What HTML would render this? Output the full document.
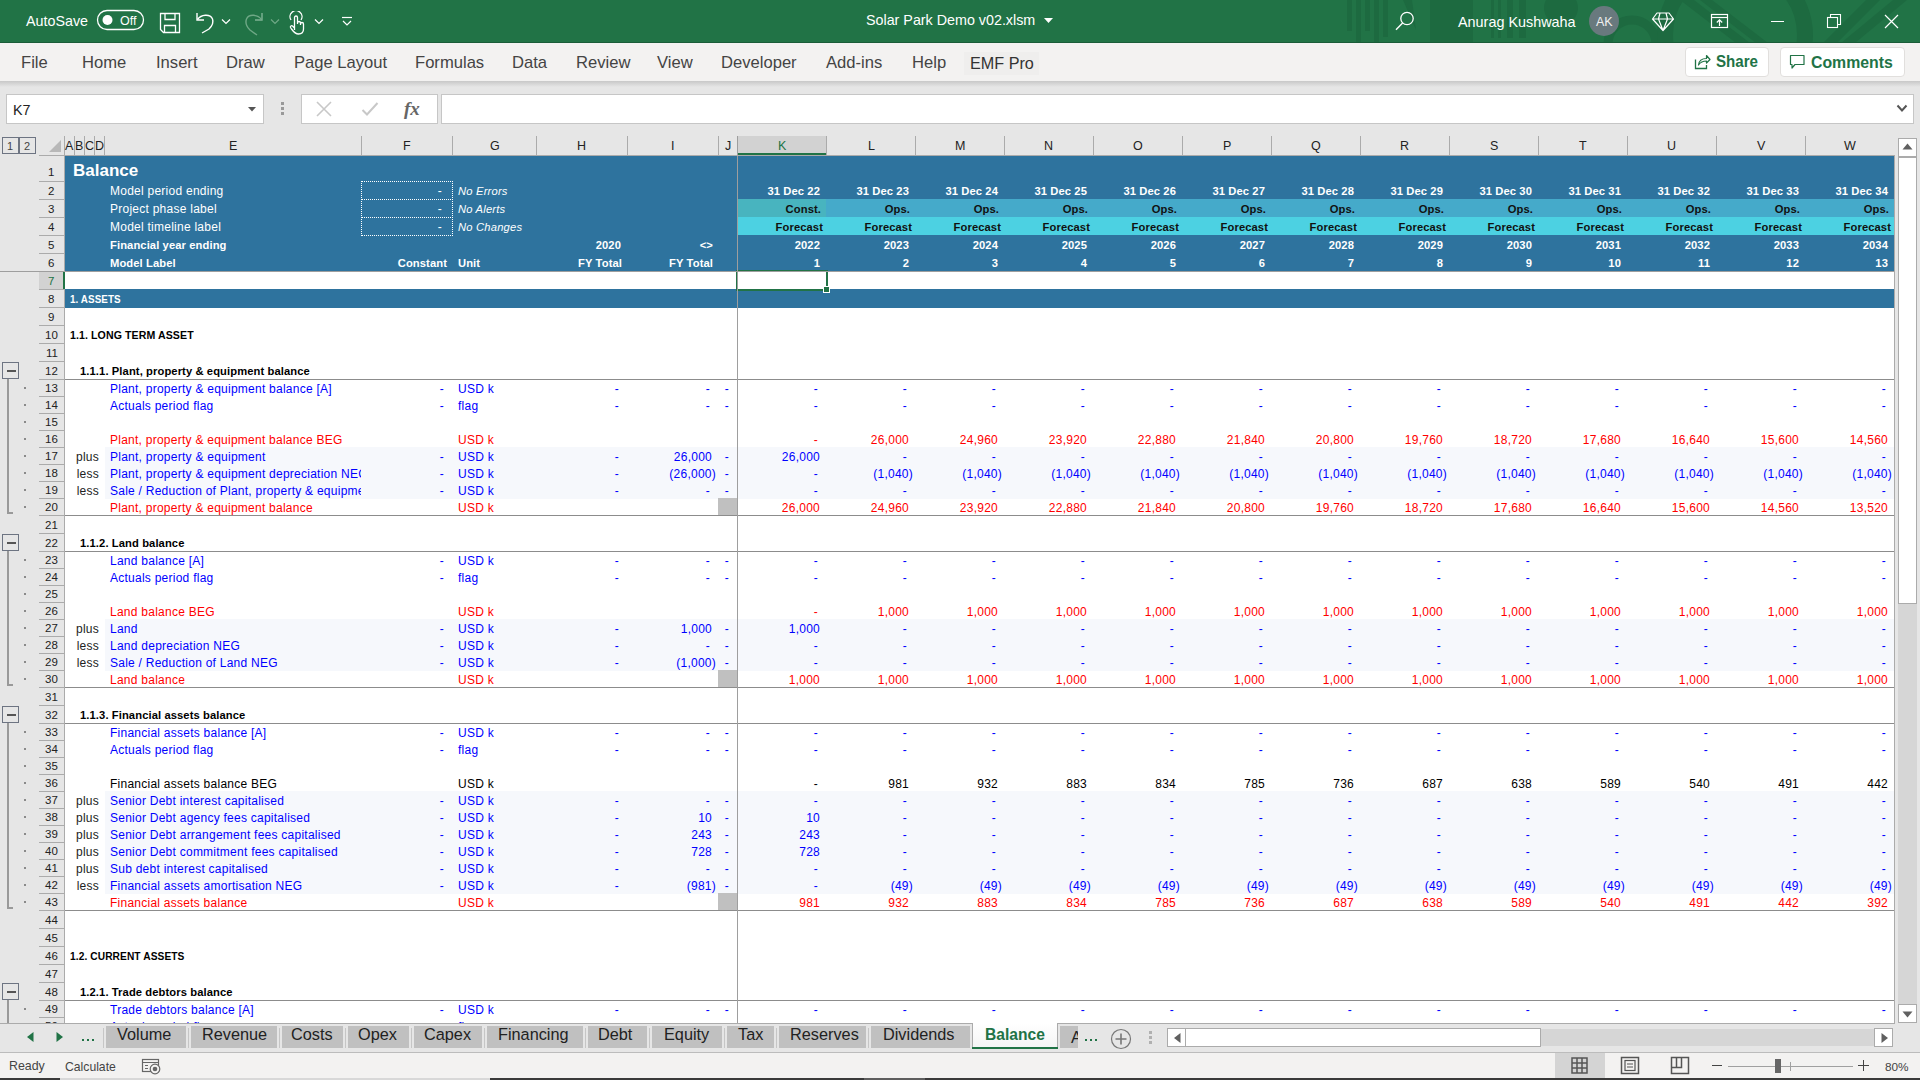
<!DOCTYPE html><html><head><meta charset="utf-8"><style>
html,body{margin:0;padding:0;}
body{width:1920px;height:1080px;position:relative;overflow:hidden;background:#e6e6e6;font-family:"Liberation Sans",sans-serif;}
.t{position:absolute;white-space:pre;}
svg{display:block;}
</style></head><body>
<div style="position:absolute;left:0px;top:0px;width:1920px;height:43px;background:#217346;"></div>
<svg style="position:absolute;left:0;top:0" width="1920" height="43" viewBox="0 0 1920 43"><rect x="1347" y="0" width="5" height="31" fill="#1d6a40"/><rect x="1356" y="0" width="5" height="42" fill="#1d6a40"/><rect x="1365" y="0" width="5" height="31" fill="#1d6a40"/><rect x="1374" y="0" width="5" height="42" fill="#1d6a40"/><rect x="1383" y="0" width="5" height="37" fill="#1d6a40"/><polygon points="1403,0 1412,0 1416,30" fill="#1d6a40"/><rect x="1430" y="0" width="43" height="42" fill="#1d6a40"/><rect x="1491" y="0" width="3" height="38" fill="#1d6a40"/><rect x="1498" y="0" width="3" height="38" fill="#1d6a40"/><rect x="1507" y="0" width="6" height="38" fill="#1d6a40"/><rect x="1519" y="0" width="7" height="38" fill="#1d6a40"/><circle cx="1561" cy="8" r="17" fill="#1d6a40"/><circle cx="1632" cy="44" r="24" fill="none" stroke="#1d6a40" stroke-width="9"/><circle cx="1735" cy="35" r="70" fill="none" stroke="#1d6a40" stroke-width="16"/><polygon points="1680,0 1694,0 1750,43 1736,43" fill="#1d6a40"/><polygon points="1700,0 1712,0 1768,43 1756,43" fill="#1d6a40"/><polygon points="1866,0 1880,0 1837,43 1823,43" fill="#1d6a40"/><polygon points="1893,0 1907,0 1855,43 1841,43" fill="#1d6a40"/></svg>
<div style="position:absolute;left:0px;top:42px;width:1920px;height:1px;background:#1a5c38;"></div>
<div class="t" style="top:12px;font-size:14.3px;line-height:19px;color:#fff;left:26px;">AutoSave</div>
<svg style="position:absolute;left:96px;top:9px;" width="50" height="23" viewBox="0 0 50 23"><rect x="1.5" y="1.5" width="46" height="19" rx="9.5" fill="none" stroke="#fff" stroke-width="1.3"/><circle cx="11.5" cy="11" r="5" fill="#fff"/></svg>
<div class="t" style="top:13px;font-size:12.5px;line-height:17px;color:#fff;left:120px;">Off</div>
<svg style="position:absolute;left:158px;top:11px;" width="24" height="24" viewBox="0 0 24 24"><path d="M2.5 2.5 H21.5 V21.5 H5.5 L2.5 18.5 Z" fill="none" stroke="#fff" stroke-width="1.3"/><path d="M7 2.5 V8.5 H17 V2.5" fill="none" stroke="#fff" stroke-width="1.3"/><path d="M6.5 21.5 V14.5 H17.5 V21.5" fill="none" stroke="#fff" stroke-width="1.3"/></svg>
<svg style="position:absolute;left:193px;top:10px;" width="24" height="26" viewBox="0 0 24 26"><path d="M4 3 V10 H11" fill="none" stroke="#fff" stroke-width="1.4"/><path d="M4.5 9.5 C8 4.5 17 3.5 19.5 9 C21 13 19 16 16 19 L9 23" fill="none" stroke="#fff" stroke-width="1.4"/></svg>
<svg style="position:absolute;left:221px;top:18px;" width="10" height="7" viewBox="0 0 10 7"><path d="M1 1.5 L5 5.5 L9 1.5" fill="none" stroke="#fff" stroke-width="1.2"/></svg>
<svg style="position:absolute;left:242px;top:10px;" width="24" height="26" viewBox="0 0 24 26"><path d="M20 3 V10 H13" fill="none" stroke="#7fb394" stroke-width="1.4"/><path d="M19.5 9.5 C16 4.5 7 3.5 4.5 9 C3 13 5 17 8 20 L15 25" fill="none" stroke="#6fa886" stroke-width="1.4"/></svg>
<svg style="position:absolute;left:270px;top:18px;" width="10" height="7" viewBox="0 0 10 7"><path d="M1 1.5 L5 5.5 L9 1.5" fill="none" stroke="#6fa886" stroke-width="1.2"/></svg>
<svg style="position:absolute;left:287px;top:11px;" width="20" height="24" viewBox="0 0 20 24"><path d="M4 9 A6 6 0 1 1 14 9" fill="none" stroke="#fff" stroke-width="1.3"/><path d="M7.5 19 V6.5 A1.5 1.5 0 0 1 10.5 6.5 V13 M10.5 12 A1.5 1.5 0 0 1 13.5 12 V14 M13.5 13 A1.5 1.5 0 0 1 16.5 13 V18 C16.5 21 14.5 23 11.5 23 C9 23 7 21.5 4.5 18 L3.5 16.5 A1.3 1.3 0 0 1 5.5 15 L7.5 17" fill="none" stroke="#fff" stroke-width="1.3"/></svg>
<svg style="position:absolute;left:314px;top:18px;" width="10" height="7" viewBox="0 0 10 7"><path d="M1 1.5 L5 5.5 L9 1.5" fill="none" stroke="#fff" stroke-width="1.2"/></svg>
<svg style="position:absolute;left:341px;top:16px;" width="12" height="12" viewBox="0 0 12 12"><path d="M1 1.5 H11" stroke="#fff" stroke-width="1.2"/><path d="M2 5 L6 9 L10 5" fill="none" stroke="#fff" stroke-width="1.2"/></svg>
<div class="t" style="top:11px;font-size:14.3px;line-height:19px;color:#fff;left:866px;">Solar Park Demo v02.xlsm</div>
<svg style="position:absolute;left:1043px;top:17px;" width="11" height="7" viewBox="0 0 11 7"><path d="M1 1 H10 L5.5 6 Z" fill="#fff"/></svg>
<svg style="position:absolute;left:1394px;top:10px;" width="22" height="22" viewBox="0 0 22 22"><circle cx="13" cy="8.5" r="6.2" fill="none" stroke="#fff" stroke-width="1.3"/><path d="M8.6 13 L2 19.8" stroke="#fff" stroke-width="1.4"/></svg>
<div class="t" style="top:13px;font-size:14.4px;line-height:19px;color:#fff;left:1458px;">Anurag Kushwaha</div>
<svg style="position:absolute;left:1588px;top:5px;" width="32" height="32" viewBox="0 0 32 32"><circle cx="16" cy="16" r="15" fill="#69797e"/></svg>
<div class="t" style="top:14px;font-size:12.5px;line-height:17px;color:#f0f0f0;left:1596px;">AK</div>
<svg style="position:absolute;left:1651px;top:11px;" width="24" height="21" viewBox="0 0 24 21"><path d="M6 2 H18 L22.5 8 L12 19.5 L1.5 8 Z M1.5 8 H22.5 M9 2 L7.5 8 L12 19.5 L16.5 8 L15 2" fill="none" stroke="#fff" stroke-width="1.2" stroke-linejoin="round"/></svg>
<svg style="position:absolute;left:1710px;top:13px;" width="20" height="17" viewBox="0 0 20 17"><rect x="1.5" y="1.5" width="16" height="13" fill="none" stroke="#fff" stroke-width="1.2"/><path d="M1.5 4.5 H17.5" stroke="#fff" stroke-width="1.2"/><path d="M9.5 13 V7 M6.8 9.5 L9.5 6.8 L12.2 9.5" fill="none" stroke="#fff" stroke-width="1.2"/></svg>
<div style="position:absolute;left:1771px;top:21px;width:13px;height:1px;background:#fff;"></div>
<svg style="position:absolute;left:1826px;top:13px;" width="17" height="17" viewBox="0 0 17 17"><rect x="1.5" y="4.5" width="10" height="10" fill="none" stroke="#fff" stroke-width="1.1"/><path d="M4.5 4.5 V1.5 H14.5 V11.5 H11.5" fill="none" stroke="#fff" stroke-width="1.1"/></svg>
<svg style="position:absolute;left:1884px;top:14px;" width="15" height="15" viewBox="0 0 15 15"><path d="M1 1 L14 14 M14 1 L1 14" stroke="#fff" stroke-width="1.2"/></svg>
<div style="position:absolute;left:0px;top:43px;width:1920px;height:38px;background:#f3f2f1;"></div>
<div class="t" style="top:52px;font-size:16.6px;line-height:22px;color:#444;left:21px;">File</div>
<div class="t" style="top:52px;font-size:16.6px;line-height:22px;color:#444;left:82px;">Home</div>
<div class="t" style="top:52px;font-size:16.6px;line-height:22px;color:#444;left:156px;">Insert</div>
<div class="t" style="top:52px;font-size:16.6px;line-height:22px;color:#444;left:226px;">Draw</div>
<div class="t" style="top:52px;font-size:16.6px;line-height:22px;color:#444;left:294px;">Page Layout</div>
<div class="t" style="top:52px;font-size:16.6px;line-height:22px;color:#444;left:415px;">Formulas</div>
<div class="t" style="top:52px;font-size:16.6px;line-height:22px;color:#444;left:512px;">Data</div>
<div class="t" style="top:52px;font-size:16.6px;line-height:22px;color:#444;left:576px;">Review</div>
<div class="t" style="top:52px;font-size:16.6px;line-height:22px;color:#444;left:657px;">View</div>
<div class="t" style="top:52px;font-size:16.6px;line-height:22px;color:#444;left:721px;">Developer</div>
<div class="t" style="top:52px;font-size:16.6px;line-height:22px;color:#444;left:826px;">Add-ins</div>
<div class="t" style="top:52px;font-size:16.6px;line-height:22px;color:#444;left:912px;">Help</div>
<div style="position:absolute;left:964px;top:52px;width:75px;height:23px;background:#efeeed;"></div>
<div class="t" style="top:52px;font-size:16.2px;line-height:22px;color:#333;left:970px;">EMF Pro</div>
<div style="position:absolute;left:1685px;top:47px;width:84px;height:30px;background:#fff;border:1px solid #e1dfdd;border-radius:4px;box-sizing:border-box"></div>
<div style="position:absolute;left:1780px;top:47px;width:125px;height:30px;background:#fff;border:1px solid #e1dfdd;border-radius:4px;box-sizing:border-box"></div>
<svg style="position:absolute;left:1694px;top:53px;" width="17" height="17" viewBox="0 0 17 17"><path d="M1.5 6.5 V15.5 H12.5 V12" fill="none" stroke="#217346" stroke-width="1.3"/><path d="M4.5 12 C5 7.5 8 5.5 12.5 5.5 V2.5 L16 6.5 L12.5 10 V8 C9 8 6.5 9 4.5 12 Z" fill="none" stroke="#217346" stroke-width="1.2" stroke-linejoin="round"/></svg>
<div class="t" style="top:51px;font-size:16.8px;line-height:22px;color:#217346;font-weight:bold;left:1716px;transform:scaleX(0.9);transform-origin:left top;">Share</div>
<svg style="position:absolute;left:1789px;top:54px;" width="17" height="16" viewBox="0 0 17 16"><path d="M1.5 1.5 H15 V10.5 H6 L3 14 V10.5 H1.5 Z" fill="none" stroke="#217346" stroke-width="1.2" stroke-linejoin="round"/></svg>
<div class="t" style="top:51px;font-size:16.5px;line-height:22px;color:#217346;font-weight:bold;left:1811px;transform:scaleX(0.96);transform-origin:left top;">Comments</div>
<div style="position:absolute;left:0;top:81px;width:1920px;height:6px;background:linear-gradient(#c8c8c8,#e6e6e6)"></div>
<div style="position:absolute;left:6px;top:94px;width:258px;height:30px;background:#fff;border:1px solid #c6c6c6;box-sizing:border-box"></div>
<div class="t" style="top:101px;font-size:14.3px;line-height:19px;color:#222;left:13px;">K7</div>
<svg style="position:absolute;left:247px;top:106px;" width="10" height="6" viewBox="0 0 10 6"><path d="M1 1 H9 L5 5.5 Z" fill="#555"/></svg>
<div style="position:absolute;left:281px;top:102px;width:3px;height:3px;background:#999;"></div>
<div style="position:absolute;left:281px;top:107px;width:3px;height:3px;background:#999;"></div>
<div style="position:absolute;left:281px;top:112px;width:3px;height:3px;background:#999;"></div>
<div style="position:absolute;left:301px;top:94px;width:137px;height:30px;background:#fff;border:1px solid #c6c6c6;box-sizing:border-box"></div>
<svg style="position:absolute;left:315px;top:100px;" width="18" height="18" viewBox="0 0 18 18"><path d="M2 2 L16 16 M16 2 L2 16" stroke="#c8c8c8" stroke-width="1.6"/></svg>
<svg style="position:absolute;left:361px;top:101px;" width="18" height="16" viewBox="0 0 18 16"><path d="M1.5 9 L6 13.5 L16.5 2" fill="none" stroke="#c8c8c8" stroke-width="2"/></svg>
<div class="t" style="top:96px;font-size:19px;line-height:25px;color:#666;font-weight:bold;font-style:italic;left:404px;font-family:'Liberation Serif',serif;">fx</div>
<div style="position:absolute;left:441px;top:94px;width:1473px;height:30px;background:#fff;border:1px solid #c6c6c6;box-sizing:border-box"></div>
<svg style="position:absolute;left:1896px;top:104px;" width="12" height="9" viewBox="0 0 12 9"><path d="M1.5 1.5 L6 6.5 L10.5 1.5" fill="none" stroke="#555" stroke-width="2"/></svg>
<div style="position:absolute;left:0px;top:134px;width:1894px;height:21px;background:#e6e6e6;"></div>
<div style="position:absolute;left:2px;top:137px;width:17px;height:17px;border:1px solid #6d7482;box-sizing:border-box"></div>
<div class="t" style="top:139px;font-size:11px;line-height:15px;color:#444;left:7px;">1</div>
<div style="position:absolute;left:19px;top:137px;width:17px;height:17px;border:1px solid #6d7482;box-sizing:border-box"></div>
<div class="t" style="top:139px;font-size:11px;line-height:15px;color:#444;left:24px;">2</div>
<svg style="position:absolute;left:49px;top:140px;" width="13" height="12" viewBox="0 0 13 12"><path d="M12 0 V12 H0 Z" fill="#b8b8b8"/></svg>
<div style="position:absolute;left:738px;top:136px;width:88px;height:19px;background:#d2d2d2;"></div>
<div style="position:absolute;left:738px;top:153px;width:88px;height:2px;background:#217346;"></div>
<div style="position:absolute;left:64px;top:136px;width:1px;height:19px;background:#ababab;"></div>
<div style="position:absolute;left:74px;top:136px;width:1px;height:19px;background:#ababab;"></div>
<div style="position:absolute;left:84px;top:136px;width:1px;height:19px;background:#ababab;"></div>
<div style="position:absolute;left:94px;top:136px;width:1px;height:19px;background:#ababab;"></div>
<div style="position:absolute;left:104px;top:136px;width:1px;height:19px;background:#ababab;"></div>
<div style="position:absolute;left:361px;top:136px;width:1px;height:19px;background:#ababab;"></div>
<div style="position:absolute;left:452px;top:136px;width:1px;height:19px;background:#ababab;"></div>
<div style="position:absolute;left:536px;top:136px;width:1px;height:19px;background:#ababab;"></div>
<div style="position:absolute;left:627px;top:136px;width:1px;height:19px;background:#ababab;"></div>
<div style="position:absolute;left:718px;top:136px;width:1px;height:19px;background:#ababab;"></div>
<div style="position:absolute;left:826px;top:136px;width:1px;height:19px;background:#ababab;"></div>
<div style="position:absolute;left:915px;top:136px;width:1px;height:19px;background:#ababab;"></div>
<div style="position:absolute;left:1004px;top:136px;width:1px;height:19px;background:#ababab;"></div>
<div style="position:absolute;left:1093px;top:136px;width:1px;height:19px;background:#ababab;"></div>
<div style="position:absolute;left:1182px;top:136px;width:1px;height:19px;background:#ababab;"></div>
<div style="position:absolute;left:1271px;top:136px;width:1px;height:19px;background:#ababab;"></div>
<div style="position:absolute;left:1360px;top:136px;width:1px;height:19px;background:#ababab;"></div>
<div style="position:absolute;left:1449px;top:136px;width:1px;height:19px;background:#ababab;"></div>
<div style="position:absolute;left:1538px;top:136px;width:1px;height:19px;background:#ababab;"></div>
<div style="position:absolute;left:1627px;top:136px;width:1px;height:19px;background:#ababab;"></div>
<div style="position:absolute;left:1716px;top:136px;width:1px;height:19px;background:#ababab;"></div>
<div style="position:absolute;left:1805px;top:136px;width:1px;height:19px;background:#ababab;"></div>
<div style="position:absolute;left:737px;top:136px;width:1px;height:887px;background:#9e9e9e;"></div>
<div style="position:absolute;left:39px;top:155px;width:1855px;height:1px;background:#ababab;"></div>
<div class="t" style="top:138px;font-size:12.5px;line-height:17px;color:#222;left:65px;">A</div>
<div class="t" style="top:138px;font-size:12.5px;line-height:17px;color:#222;left:75px;">B</div>
<div class="t" style="top:138px;font-size:12.5px;line-height:17px;color:#222;left:85px;">C</div>
<div class="t" style="top:138px;font-size:12.5px;line-height:17px;color:#222;left:95px;">D</div>
<div class="t" style="top:138px;font-size:12.5px;line-height:17px;color:#222;left:229px;">E</div>
<div class="t" style="top:138px;font-size:12.5px;line-height:17px;color:#222;left:403px;">F</div>
<div class="t" style="top:138px;font-size:12.5px;line-height:17px;color:#222;left:490px;">G</div>
<div class="t" style="top:138px;font-size:12.5px;line-height:17px;color:#222;left:577px;">H</div>
<div class="t" style="top:138px;font-size:12.5px;line-height:17px;color:#222;left:671px;">I</div>
<div class="t" style="top:138px;font-size:12.5px;line-height:17px;color:#222;left:725px;">J</div>
<div class="t" style="top:138px;font-size:12.5px;line-height:17px;color:#217346;left:778px;">K</div>
<div class="t" style="top:138px;font-size:12.5px;line-height:17px;color:#222;left:868px;">L</div>
<div class="t" style="top:138px;font-size:12.5px;line-height:17px;color:#222;left:955px;">M</div>
<div class="t" style="top:138px;font-size:12.5px;line-height:17px;color:#222;left:1044px;">N</div>
<div class="t" style="top:138px;font-size:12.5px;line-height:17px;color:#222;left:1133px;">O</div>
<div class="t" style="top:138px;font-size:12.5px;line-height:17px;color:#222;left:1223px;">P</div>
<div class="t" style="top:138px;font-size:12.5px;line-height:17px;color:#222;left:1311px;">Q</div>
<div class="t" style="top:138px;font-size:12.5px;line-height:17px;color:#222;left:1400px;">R</div>
<div class="t" style="top:138px;font-size:12.5px;line-height:17px;color:#222;left:1490px;">S</div>
<div class="t" style="top:138px;font-size:12.5px;line-height:17px;color:#222;left:1579px;">T</div>
<div class="t" style="top:138px;font-size:12.5px;line-height:17px;color:#222;left:1667px;">U</div>
<div class="t" style="top:138px;font-size:12.5px;line-height:17px;color:#222;left:1757px;">V</div>
<div class="t" style="top:138px;font-size:12.5px;line-height:17px;color:#222;left:1844px;">W</div>
<div style="position:absolute;left:39px;top:272px;width:24px;height:17px;background:#d2d2d2;"></div>
<div style="position:absolute;left:39px;top:181px;width:25px;height:1px;background:#ababab;"></div>
<div style="position:absolute;left:39px;top:199px;width:25px;height:1px;background:#ababab;"></div>
<div style="position:absolute;left:39px;top:217px;width:25px;height:1px;background:#ababab;"></div>
<div style="position:absolute;left:39px;top:235px;width:25px;height:1px;background:#ababab;"></div>
<div style="position:absolute;left:39px;top:253px;width:25px;height:1px;background:#ababab;"></div>
<div style="position:absolute;left:39px;top:289px;width:25px;height:1px;background:#ababab;"></div>
<div style="position:absolute;left:39px;top:307px;width:25px;height:1px;background:#ababab;"></div>
<div style="position:absolute;left:39px;top:325px;width:25px;height:1px;background:#ababab;"></div>
<div style="position:absolute;left:39px;top:343px;width:25px;height:1px;background:#ababab;"></div>
<div style="position:absolute;left:39px;top:361px;width:25px;height:1px;background:#ababab;"></div>
<div style="position:absolute;left:39px;top:379px;width:25px;height:1px;background:#ababab;"></div>
<div style="position:absolute;left:39px;top:396px;width:25px;height:1px;background:#ababab;"></div>
<div style="position:absolute;left:39px;top:413px;width:25px;height:1px;background:#ababab;"></div>
<div style="position:absolute;left:39px;top:430px;width:25px;height:1px;background:#ababab;"></div>
<div style="position:absolute;left:39px;top:447px;width:25px;height:1px;background:#ababab;"></div>
<div style="position:absolute;left:39px;top:464px;width:25px;height:1px;background:#ababab;"></div>
<div style="position:absolute;left:39px;top:481px;width:25px;height:1px;background:#ababab;"></div>
<div style="position:absolute;left:39px;top:498px;width:25px;height:1px;background:#ababab;"></div>
<div style="position:absolute;left:39px;top:515px;width:25px;height:1px;background:#ababab;"></div>
<div style="position:absolute;left:39px;top:533px;width:25px;height:1px;background:#ababab;"></div>
<div style="position:absolute;left:39px;top:551px;width:25px;height:1px;background:#ababab;"></div>
<div style="position:absolute;left:39px;top:568px;width:25px;height:1px;background:#ababab;"></div>
<div style="position:absolute;left:39px;top:585px;width:25px;height:1px;background:#ababab;"></div>
<div style="position:absolute;left:39px;top:602px;width:25px;height:1px;background:#ababab;"></div>
<div style="position:absolute;left:39px;top:619px;width:25px;height:1px;background:#ababab;"></div>
<div style="position:absolute;left:39px;top:636px;width:25px;height:1px;background:#ababab;"></div>
<div style="position:absolute;left:39px;top:653px;width:25px;height:1px;background:#ababab;"></div>
<div style="position:absolute;left:39px;top:670px;width:25px;height:1px;background:#ababab;"></div>
<div style="position:absolute;left:39px;top:687px;width:25px;height:1px;background:#ababab;"></div>
<div style="position:absolute;left:39px;top:705px;width:25px;height:1px;background:#ababab;"></div>
<div style="position:absolute;left:39px;top:723px;width:25px;height:1px;background:#ababab;"></div>
<div style="position:absolute;left:39px;top:740px;width:25px;height:1px;background:#ababab;"></div>
<div style="position:absolute;left:39px;top:757px;width:25px;height:1px;background:#ababab;"></div>
<div style="position:absolute;left:39px;top:774px;width:25px;height:1px;background:#ababab;"></div>
<div style="position:absolute;left:39px;top:791px;width:25px;height:1px;background:#ababab;"></div>
<div style="position:absolute;left:39px;top:808px;width:25px;height:1px;background:#ababab;"></div>
<div style="position:absolute;left:39px;top:825px;width:25px;height:1px;background:#ababab;"></div>
<div style="position:absolute;left:39px;top:842px;width:25px;height:1px;background:#ababab;"></div>
<div style="position:absolute;left:39px;top:859px;width:25px;height:1px;background:#ababab;"></div>
<div style="position:absolute;left:39px;top:876px;width:25px;height:1px;background:#ababab;"></div>
<div style="position:absolute;left:39px;top:893px;width:25px;height:1px;background:#ababab;"></div>
<div style="position:absolute;left:39px;top:910px;width:25px;height:1px;background:#ababab;"></div>
<div style="position:absolute;left:39px;top:928px;width:25px;height:1px;background:#ababab;"></div>
<div style="position:absolute;left:39px;top:946px;width:25px;height:1px;background:#ababab;"></div>
<div style="position:absolute;left:39px;top:964px;width:25px;height:1px;background:#ababab;"></div>
<div style="position:absolute;left:39px;top:982px;width:25px;height:1px;background:#ababab;"></div>
<div style="position:absolute;left:39px;top:1000px;width:25px;height:1px;background:#ababab;"></div>
<div style="position:absolute;left:39px;top:1017px;width:25px;height:1px;background:#ababab;"></div>
<div style="position:absolute;left:0px;top:271px;width:1894px;height:1px;background:#9e9e9e;"></div>
<div style="position:absolute;left:64px;top:155px;width:1px;height:868px;background:#ababab;"></div>
<div style="position:absolute;left:63px;top:272px;width:2px;height:17px;background:#217346;"></div>
<div class="t" style="top:165px;font-size:11.5px;line-height:15px;color:#222;left:48px;">1</div>
<div class="t" style="top:184px;font-size:11.5px;line-height:15px;color:#222;left:48px;">2</div>
<div class="t" style="top:202px;font-size:11.5px;line-height:15px;color:#222;left:48px;">3</div>
<div class="t" style="top:220px;font-size:11.5px;line-height:15px;color:#222;left:48px;">4</div>
<div class="t" style="top:238px;font-size:11.5px;line-height:15px;color:#222;left:48px;">5</div>
<div class="t" style="top:256px;font-size:11.5px;line-height:15px;color:#222;left:48px;">6</div>
<div class="t" style="top:274px;font-size:11.5px;line-height:15px;color:#217346;left:48px;">7</div>
<div class="t" style="top:292px;font-size:11.5px;line-height:15px;color:#222;left:48px;">8</div>
<div class="t" style="top:310px;font-size:11.5px;line-height:15px;color:#222;left:48px;">9</div>
<div class="t" style="top:328px;font-size:11.5px;line-height:15px;color:#222;left:45px;">10</div>
<div class="t" style="top:346px;font-size:11.5px;line-height:15px;color:#222;left:46px;">11</div>
<div class="t" style="top:364px;font-size:11.5px;line-height:15px;color:#222;left:45px;">12</div>
<div class="t" style="top:381px;font-size:11.5px;line-height:15px;color:#222;left:45px;">13</div>
<div class="t" style="top:398px;font-size:11.5px;line-height:15px;color:#222;left:45px;">14</div>
<div class="t" style="top:415px;font-size:11.5px;line-height:15px;color:#222;left:45px;">15</div>
<div class="t" style="top:432px;font-size:11.5px;line-height:15px;color:#222;left:45px;">16</div>
<div class="t" style="top:449px;font-size:11.5px;line-height:15px;color:#222;left:45px;">17</div>
<div class="t" style="top:466px;font-size:11.5px;line-height:15px;color:#222;left:45px;">18</div>
<div class="t" style="top:483px;font-size:11.5px;line-height:15px;color:#222;left:45px;">19</div>
<div class="t" style="top:500px;font-size:11.5px;line-height:15px;color:#222;left:45px;">20</div>
<div class="t" style="top:518px;font-size:11.5px;line-height:15px;color:#222;left:45px;">21</div>
<div class="t" style="top:536px;font-size:11.5px;line-height:15px;color:#222;left:45px;">22</div>
<div class="t" style="top:553px;font-size:11.5px;line-height:15px;color:#222;left:45px;">23</div>
<div class="t" style="top:570px;font-size:11.5px;line-height:15px;color:#222;left:45px;">24</div>
<div class="t" style="top:587px;font-size:11.5px;line-height:15px;color:#222;left:45px;">25</div>
<div class="t" style="top:604px;font-size:11.5px;line-height:15px;color:#222;left:45px;">26</div>
<div class="t" style="top:621px;font-size:11.5px;line-height:15px;color:#222;left:45px;">27</div>
<div class="t" style="top:638px;font-size:11.5px;line-height:15px;color:#222;left:45px;">28</div>
<div class="t" style="top:655px;font-size:11.5px;line-height:15px;color:#222;left:45px;">29</div>
<div class="t" style="top:672px;font-size:11.5px;line-height:15px;color:#222;left:45px;">30</div>
<div class="t" style="top:690px;font-size:11.5px;line-height:15px;color:#222;left:45px;">31</div>
<div class="t" style="top:708px;font-size:11.5px;line-height:15px;color:#222;left:45px;">32</div>
<div class="t" style="top:725px;font-size:11.5px;line-height:15px;color:#222;left:45px;">33</div>
<div class="t" style="top:742px;font-size:11.5px;line-height:15px;color:#222;left:45px;">34</div>
<div class="t" style="top:759px;font-size:11.5px;line-height:15px;color:#222;left:45px;">35</div>
<div class="t" style="top:776px;font-size:11.5px;line-height:15px;color:#222;left:45px;">36</div>
<div class="t" style="top:793px;font-size:11.5px;line-height:15px;color:#222;left:45px;">37</div>
<div class="t" style="top:810px;font-size:11.5px;line-height:15px;color:#222;left:45px;">38</div>
<div class="t" style="top:827px;font-size:11.5px;line-height:15px;color:#222;left:45px;">39</div>
<div class="t" style="top:844px;font-size:11.5px;line-height:15px;color:#222;left:45px;">40</div>
<div class="t" style="top:861px;font-size:11.5px;line-height:15px;color:#222;left:45px;">41</div>
<div class="t" style="top:878px;font-size:11.5px;line-height:15px;color:#222;left:45px;">42</div>
<div class="t" style="top:895px;font-size:11.5px;line-height:15px;color:#222;left:45px;">43</div>
<div class="t" style="top:913px;font-size:11.5px;line-height:15px;color:#222;left:45px;">44</div>
<div class="t" style="top:931px;font-size:11.5px;line-height:15px;color:#222;left:45px;">45</div>
<div class="t" style="top:949px;font-size:11.5px;line-height:15px;color:#222;left:45px;">46</div>
<div class="t" style="top:967px;font-size:11.5px;line-height:15px;color:#222;left:45px;">47</div>
<div class="t" style="top:985px;font-size:11.5px;line-height:15px;color:#222;left:45px;">48</div>
<div class="t" style="top:1002px;font-size:11.5px;line-height:15px;color:#222;left:45px;">49</div>
<div class="t" style="top:1019px;font-size:11.5px;line-height:15px;color:#222;left:45px;">50</div>
<div style="position:absolute;left:2px;top:362px;width:17px;height:17px;border:1px solid #6d7482;box-sizing:border-box"></div>
<div style="position:absolute;left:7px;top:370px;width:9px;height:2px;background:#555;"></div>
<div style="position:absolute;left:7px;top:379px;width:2px;height:134px;background:#999;"></div>
<div style="position:absolute;left:7px;top:512px;width:6px;height:2px;background:#999;"></div>
<div style="position:absolute;left:24px;top:387px;width:2px;height:2px;background:#8a8a8a;"></div>
<div style="position:absolute;left:24px;top:404px;width:2px;height:2px;background:#8a8a8a;"></div>
<div style="position:absolute;left:24px;top:421px;width:2px;height:2px;background:#8a8a8a;"></div>
<div style="position:absolute;left:24px;top:438px;width:2px;height:2px;background:#8a8a8a;"></div>
<div style="position:absolute;left:24px;top:455px;width:2px;height:2px;background:#8a8a8a;"></div>
<div style="position:absolute;left:24px;top:472px;width:2px;height:2px;background:#8a8a8a;"></div>
<div style="position:absolute;left:24px;top:489px;width:2px;height:2px;background:#8a8a8a;"></div>
<div style="position:absolute;left:24px;top:506px;width:2px;height:2px;background:#8a8a8a;"></div>
<div style="position:absolute;left:2px;top:534px;width:17px;height:17px;border:1px solid #6d7482;box-sizing:border-box"></div>
<div style="position:absolute;left:7px;top:542px;width:9px;height:2px;background:#555;"></div>
<div style="position:absolute;left:7px;top:551px;width:2px;height:134px;background:#999;"></div>
<div style="position:absolute;left:7px;top:684px;width:6px;height:2px;background:#999;"></div>
<div style="position:absolute;left:24px;top:559px;width:2px;height:2px;background:#8a8a8a;"></div>
<div style="position:absolute;left:24px;top:576px;width:2px;height:2px;background:#8a8a8a;"></div>
<div style="position:absolute;left:24px;top:593px;width:2px;height:2px;background:#8a8a8a;"></div>
<div style="position:absolute;left:24px;top:610px;width:2px;height:2px;background:#8a8a8a;"></div>
<div style="position:absolute;left:24px;top:627px;width:2px;height:2px;background:#8a8a8a;"></div>
<div style="position:absolute;left:24px;top:644px;width:2px;height:2px;background:#8a8a8a;"></div>
<div style="position:absolute;left:24px;top:661px;width:2px;height:2px;background:#8a8a8a;"></div>
<div style="position:absolute;left:24px;top:678px;width:2px;height:2px;background:#8a8a8a;"></div>
<div style="position:absolute;left:2px;top:706px;width:17px;height:17px;border:1px solid #6d7482;box-sizing:border-box"></div>
<div style="position:absolute;left:7px;top:714px;width:9px;height:2px;background:#555;"></div>
<div style="position:absolute;left:7px;top:723px;width:2px;height:185px;background:#999;"></div>
<div style="position:absolute;left:7px;top:907px;width:6px;height:2px;background:#999;"></div>
<div style="position:absolute;left:24px;top:731px;width:2px;height:2px;background:#8a8a8a;"></div>
<div style="position:absolute;left:24px;top:748px;width:2px;height:2px;background:#8a8a8a;"></div>
<div style="position:absolute;left:24px;top:765px;width:2px;height:2px;background:#8a8a8a;"></div>
<div style="position:absolute;left:24px;top:782px;width:2px;height:2px;background:#8a8a8a;"></div>
<div style="position:absolute;left:24px;top:799px;width:2px;height:2px;background:#8a8a8a;"></div>
<div style="position:absolute;left:24px;top:816px;width:2px;height:2px;background:#8a8a8a;"></div>
<div style="position:absolute;left:24px;top:833px;width:2px;height:2px;background:#8a8a8a;"></div>
<div style="position:absolute;left:24px;top:850px;width:2px;height:2px;background:#8a8a8a;"></div>
<div style="position:absolute;left:24px;top:867px;width:2px;height:2px;background:#8a8a8a;"></div>
<div style="position:absolute;left:24px;top:884px;width:2px;height:2px;background:#8a8a8a;"></div>
<div style="position:absolute;left:24px;top:901px;width:2px;height:2px;background:#8a8a8a;"></div>
<div style="position:absolute;left:2px;top:983px;width:17px;height:17px;border:1px solid #6d7482;box-sizing:border-box"></div>
<div style="position:absolute;left:7px;top:991px;width:9px;height:2px;background:#555;"></div>
<div style="position:absolute;left:7px;top:1000px;width:2px;height:23px;background:#999;"></div>
<div style="position:absolute;left:24px;top:1008px;width:2px;height:2px;background:#8a8a8a;"></div>
<div style="position:absolute;left:65px;top:156px;width:1829px;height:867px;overflow:hidden;background:#fff">
<div style="position:absolute;left:-65px;top:-156px;width:1894px;height:1023px">
<div style="position:absolute;left:65px;top:156px;width:1829px;height:115px;background:#2e739e;"></div>
<div style="position:absolute;left:737px;top:199px;width:89px;height:18px;background:#48b4bf;"></div>
<div style="position:absolute;left:826px;top:199px;width:1068px;height:18px;background:#45aaca;"></div>
<div style="position:absolute;left:737px;top:217px;width:1157px;height:18px;background:#4cd1e2;"></div>
<div style="position:absolute;left:65px;top:289px;width:1829px;height:19px;background:#2e739e;"></div>
<div style="position:absolute;left:105px;top:447px;width:1789px;height:52px;background:#f6f8fc;"></div>
<div style="position:absolute;left:105px;top:619px;width:1789px;height:52px;background:#f6f8fc;"></div>
<div style="position:absolute;left:105px;top:791px;width:1789px;height:103px;background:#f6f8fc;"></div>
<div style="position:absolute;left:718px;top:498px;width:19px;height:18px;background:#c0c0c0;"></div>
<div style="position:absolute;left:718px;top:670px;width:19px;height:18px;background:#c0c0c0;"></div>
<div style="position:absolute;left:718px;top:893px;width:19px;height:18px;background:#c0c0c0;"></div>
<div style="position:absolute;left:65px;top:379px;width:1829px;height:1px;background:#8c8c8c;"></div>
<div style="position:absolute;left:65px;top:515px;width:1829px;height:1px;background:#8c8c8c;"></div>
<div style="position:absolute;left:65px;top:551px;width:1829px;height:1px;background:#8c8c8c;"></div>
<div style="position:absolute;left:65px;top:687px;width:1829px;height:1px;background:#8c8c8c;"></div>
<div style="position:absolute;left:65px;top:723px;width:1829px;height:1px;background:#8c8c8c;"></div>
<div style="position:absolute;left:65px;top:910px;width:1829px;height:1px;background:#8c8c8c;"></div>
<div style="position:absolute;left:65px;top:1000px;width:1829px;height:1px;background:#8c8c8c;"></div>
<div style="position:absolute;left:361px;top:181px;width:92px;height:55px;border:1px dotted #fff;box-sizing:border-box"></div>
<div style="position:absolute;left:361px;top:199px;width:92px;height:1px;background:transparent;border-top:1px dotted #fff;height:0"></div>
<div style="position:absolute;left:361px;top:217px;width:92px;height:1px;background:transparent;border-top:1px dotted #fff;height:0"></div>
<div class="t" style="top:159px;font-size:17px;line-height:23px;color:#fff;font-weight:bold;left:73px;">Balance</div>
<div class="t" style="top:183px;font-size:12px;line-height:16px;color:#fff;letter-spacing:0.25px;left:110px;">Model period ending</div>
<div class="t" style="top:201px;font-size:12px;line-height:16px;color:#fff;letter-spacing:0.25px;left:110px;">Project phase label</div>
<div class="t" style="top:219px;font-size:12px;line-height:16px;color:#fff;letter-spacing:0.25px;left:110px;">Model timeline label</div>
<div class="t" style="top:238px;font-size:11.2px;line-height:15px;color:#fff;font-weight:bold;letter-spacing:0.1px;left:110px;">Financial year ending</div>
<div class="t" style="top:256px;font-size:11.2px;line-height:15px;color:#fff;font-weight:bold;letter-spacing:0.1px;left:110px;">Model Label</div>
<div class="t" style="top:183px;font-size:12px;line-height:16px;color:#fff;letter-spacing:0.25px;left:-158px;width:600px;text-align:right;margin-right:-0.25px;">-</div>
<div class="t" style="top:201px;font-size:12px;line-height:16px;color:#fff;letter-spacing:0.25px;left:-158px;width:600px;text-align:right;margin-right:-0.25px;">-</div>
<div class="t" style="top:219px;font-size:12px;line-height:16px;color:#fff;letter-spacing:0.25px;left:-158px;width:600px;text-align:right;margin-right:-0.25px;">-</div>
<div class="t" style="top:184px;font-size:11.2px;line-height:15px;color:#fff;font-style:italic;letter-spacing:0.2px;left:458px;">No Errors</div>
<div class="t" style="top:202px;font-size:11.2px;line-height:15px;color:#fff;font-style:italic;letter-spacing:0.2px;left:458px;">No Alerts</div>
<div class="t" style="top:220px;font-size:11.2px;line-height:15px;color:#fff;font-style:italic;letter-spacing:0.2px;left:458px;">No Changes</div>
<div class="t" style="top:238px;font-size:11.2px;line-height:15px;color:#fff;font-weight:bold;letter-spacing:0.1px;left:21px;width:600px;text-align:right;margin-right:-0.1px;">2020</div>
<div class="t" style="top:238px;font-size:11.2px;line-height:15px;color:#fff;font-weight:bold;letter-spacing:0.1px;left:113px;width:600px;text-align:right;margin-right:-0.1px;">&lt;&gt;</div>
<div class="t" style="top:256px;font-size:11.2px;line-height:15px;color:#fff;font-weight:bold;letter-spacing:0.1px;left:-153px;width:600px;text-align:right;margin-right:-0.1px;">Constant</div>
<div class="t" style="top:256px;font-size:11.2px;line-height:15px;color:#fff;font-weight:bold;letter-spacing:0.1px;left:458px;">Unit</div>
<div class="t" style="top:256px;font-size:11.2px;line-height:15px;color:#fff;font-weight:bold;letter-spacing:0.1px;left:22px;width:600px;text-align:right;margin-right:-0.1px;">FY Total</div>
<div class="t" style="top:256px;font-size:11.2px;line-height:15px;color:#fff;font-weight:bold;letter-spacing:0.1px;left:113px;width:600px;text-align:right;margin-right:-0.1px;">FY Total</div>
<div class="t" style="top:184px;font-size:11.2px;line-height:15px;color:#fff;font-weight:bold;letter-spacing:0.1px;left:220px;width:600px;text-align:right;margin-right:-0.1px;">31 Dec 22</div>
<div class="t" style="top:202px;font-size:11.2px;line-height:15px;color:#111;font-weight:bold;letter-spacing:0.1px;left:221px;width:600px;text-align:right;margin-right:-0.1px;">Const.</div>
<div class="t" style="top:220px;font-size:11.2px;line-height:15px;color:#111;font-weight:bold;letter-spacing:0.1px;left:223px;width:600px;text-align:right;margin-right:-0.1px;">Forecast</div>
<div class="t" style="top:238px;font-size:11.2px;line-height:15px;color:#fff;font-weight:bold;letter-spacing:0.1px;left:220px;width:600px;text-align:right;margin-right:-0.1px;">2022</div>
<div class="t" style="top:256px;font-size:11.2px;line-height:15px;color:#fff;font-weight:bold;letter-spacing:0.1px;left:220px;width:600px;text-align:right;margin-right:-0.1px;">1</div>
<div class="t" style="top:184px;font-size:11.2px;line-height:15px;color:#fff;font-weight:bold;letter-spacing:0.1px;left:309px;width:600px;text-align:right;margin-right:-0.1px;">31 Dec 23</div>
<div class="t" style="top:202px;font-size:11.2px;line-height:15px;color:#111;font-weight:bold;letter-spacing:0.1px;left:310px;width:600px;text-align:right;margin-right:-0.1px;">Ops.</div>
<div class="t" style="top:220px;font-size:11.2px;line-height:15px;color:#111;font-weight:bold;letter-spacing:0.1px;left:312px;width:600px;text-align:right;margin-right:-0.1px;">Forecast</div>
<div class="t" style="top:238px;font-size:11.2px;line-height:15px;color:#fff;font-weight:bold;letter-spacing:0.1px;left:309px;width:600px;text-align:right;margin-right:-0.1px;">2023</div>
<div class="t" style="top:256px;font-size:11.2px;line-height:15px;color:#fff;font-weight:bold;letter-spacing:0.1px;left:309px;width:600px;text-align:right;margin-right:-0.1px;">2</div>
<div class="t" style="top:184px;font-size:11.2px;line-height:15px;color:#fff;font-weight:bold;letter-spacing:0.1px;left:398px;width:600px;text-align:right;margin-right:-0.1px;">31 Dec 24</div>
<div class="t" style="top:202px;font-size:11.2px;line-height:15px;color:#111;font-weight:bold;letter-spacing:0.1px;left:399px;width:600px;text-align:right;margin-right:-0.1px;">Ops.</div>
<div class="t" style="top:220px;font-size:11.2px;line-height:15px;color:#111;font-weight:bold;letter-spacing:0.1px;left:401px;width:600px;text-align:right;margin-right:-0.1px;">Forecast</div>
<div class="t" style="top:238px;font-size:11.2px;line-height:15px;color:#fff;font-weight:bold;letter-spacing:0.1px;left:398px;width:600px;text-align:right;margin-right:-0.1px;">2024</div>
<div class="t" style="top:256px;font-size:11.2px;line-height:15px;color:#fff;font-weight:bold;letter-spacing:0.1px;left:398px;width:600px;text-align:right;margin-right:-0.1px;">3</div>
<div class="t" style="top:184px;font-size:11.2px;line-height:15px;color:#fff;font-weight:bold;letter-spacing:0.1px;left:487px;width:600px;text-align:right;margin-right:-0.1px;">31 Dec 25</div>
<div class="t" style="top:202px;font-size:11.2px;line-height:15px;color:#111;font-weight:bold;letter-spacing:0.1px;left:488px;width:600px;text-align:right;margin-right:-0.1px;">Ops.</div>
<div class="t" style="top:220px;font-size:11.2px;line-height:15px;color:#111;font-weight:bold;letter-spacing:0.1px;left:490px;width:600px;text-align:right;margin-right:-0.1px;">Forecast</div>
<div class="t" style="top:238px;font-size:11.2px;line-height:15px;color:#fff;font-weight:bold;letter-spacing:0.1px;left:487px;width:600px;text-align:right;margin-right:-0.1px;">2025</div>
<div class="t" style="top:256px;font-size:11.2px;line-height:15px;color:#fff;font-weight:bold;letter-spacing:0.1px;left:487px;width:600px;text-align:right;margin-right:-0.1px;">4</div>
<div class="t" style="top:184px;font-size:11.2px;line-height:15px;color:#fff;font-weight:bold;letter-spacing:0.1px;left:576px;width:600px;text-align:right;margin-right:-0.1px;">31 Dec 26</div>
<div class="t" style="top:202px;font-size:11.2px;line-height:15px;color:#111;font-weight:bold;letter-spacing:0.1px;left:577px;width:600px;text-align:right;margin-right:-0.1px;">Ops.</div>
<div class="t" style="top:220px;font-size:11.2px;line-height:15px;color:#111;font-weight:bold;letter-spacing:0.1px;left:579px;width:600px;text-align:right;margin-right:-0.1px;">Forecast</div>
<div class="t" style="top:238px;font-size:11.2px;line-height:15px;color:#fff;font-weight:bold;letter-spacing:0.1px;left:576px;width:600px;text-align:right;margin-right:-0.1px;">2026</div>
<div class="t" style="top:256px;font-size:11.2px;line-height:15px;color:#fff;font-weight:bold;letter-spacing:0.1px;left:576px;width:600px;text-align:right;margin-right:-0.1px;">5</div>
<div class="t" style="top:184px;font-size:11.2px;line-height:15px;color:#fff;font-weight:bold;letter-spacing:0.1px;left:665px;width:600px;text-align:right;margin-right:-0.1px;">31 Dec 27</div>
<div class="t" style="top:202px;font-size:11.2px;line-height:15px;color:#111;font-weight:bold;letter-spacing:0.1px;left:666px;width:600px;text-align:right;margin-right:-0.1px;">Ops.</div>
<div class="t" style="top:220px;font-size:11.2px;line-height:15px;color:#111;font-weight:bold;letter-spacing:0.1px;left:668px;width:600px;text-align:right;margin-right:-0.1px;">Forecast</div>
<div class="t" style="top:238px;font-size:11.2px;line-height:15px;color:#fff;font-weight:bold;letter-spacing:0.1px;left:665px;width:600px;text-align:right;margin-right:-0.1px;">2027</div>
<div class="t" style="top:256px;font-size:11.2px;line-height:15px;color:#fff;font-weight:bold;letter-spacing:0.1px;left:665px;width:600px;text-align:right;margin-right:-0.1px;">6</div>
<div class="t" style="top:184px;font-size:11.2px;line-height:15px;color:#fff;font-weight:bold;letter-spacing:0.1px;left:754px;width:600px;text-align:right;margin-right:-0.1px;">31 Dec 28</div>
<div class="t" style="top:202px;font-size:11.2px;line-height:15px;color:#111;font-weight:bold;letter-spacing:0.1px;left:755px;width:600px;text-align:right;margin-right:-0.1px;">Ops.</div>
<div class="t" style="top:220px;font-size:11.2px;line-height:15px;color:#111;font-weight:bold;letter-spacing:0.1px;left:757px;width:600px;text-align:right;margin-right:-0.1px;">Forecast</div>
<div class="t" style="top:238px;font-size:11.2px;line-height:15px;color:#fff;font-weight:bold;letter-spacing:0.1px;left:754px;width:600px;text-align:right;margin-right:-0.1px;">2028</div>
<div class="t" style="top:256px;font-size:11.2px;line-height:15px;color:#fff;font-weight:bold;letter-spacing:0.1px;left:754px;width:600px;text-align:right;margin-right:-0.1px;">7</div>
<div class="t" style="top:184px;font-size:11.2px;line-height:15px;color:#fff;font-weight:bold;letter-spacing:0.1px;left:843px;width:600px;text-align:right;margin-right:-0.1px;">31 Dec 29</div>
<div class="t" style="top:202px;font-size:11.2px;line-height:15px;color:#111;font-weight:bold;letter-spacing:0.1px;left:844px;width:600px;text-align:right;margin-right:-0.1px;">Ops.</div>
<div class="t" style="top:220px;font-size:11.2px;line-height:15px;color:#111;font-weight:bold;letter-spacing:0.1px;left:846px;width:600px;text-align:right;margin-right:-0.1px;">Forecast</div>
<div class="t" style="top:238px;font-size:11.2px;line-height:15px;color:#fff;font-weight:bold;letter-spacing:0.1px;left:843px;width:600px;text-align:right;margin-right:-0.1px;">2029</div>
<div class="t" style="top:256px;font-size:11.2px;line-height:15px;color:#fff;font-weight:bold;letter-spacing:0.1px;left:843px;width:600px;text-align:right;margin-right:-0.1px;">8</div>
<div class="t" style="top:184px;font-size:11.2px;line-height:15px;color:#fff;font-weight:bold;letter-spacing:0.1px;left:932px;width:600px;text-align:right;margin-right:-0.1px;">31 Dec 30</div>
<div class="t" style="top:202px;font-size:11.2px;line-height:15px;color:#111;font-weight:bold;letter-spacing:0.1px;left:933px;width:600px;text-align:right;margin-right:-0.1px;">Ops.</div>
<div class="t" style="top:220px;font-size:11.2px;line-height:15px;color:#111;font-weight:bold;letter-spacing:0.1px;left:935px;width:600px;text-align:right;margin-right:-0.1px;">Forecast</div>
<div class="t" style="top:238px;font-size:11.2px;line-height:15px;color:#fff;font-weight:bold;letter-spacing:0.1px;left:932px;width:600px;text-align:right;margin-right:-0.1px;">2030</div>
<div class="t" style="top:256px;font-size:11.2px;line-height:15px;color:#fff;font-weight:bold;letter-spacing:0.1px;left:932px;width:600px;text-align:right;margin-right:-0.1px;">9</div>
<div class="t" style="top:184px;font-size:11.2px;line-height:15px;color:#fff;font-weight:bold;letter-spacing:0.1px;left:1021px;width:600px;text-align:right;margin-right:-0.1px;">31 Dec 31</div>
<div class="t" style="top:202px;font-size:11.2px;line-height:15px;color:#111;font-weight:bold;letter-spacing:0.1px;left:1022px;width:600px;text-align:right;margin-right:-0.1px;">Ops.</div>
<div class="t" style="top:220px;font-size:11.2px;line-height:15px;color:#111;font-weight:bold;letter-spacing:0.1px;left:1024px;width:600px;text-align:right;margin-right:-0.1px;">Forecast</div>
<div class="t" style="top:238px;font-size:11.2px;line-height:15px;color:#fff;font-weight:bold;letter-spacing:0.1px;left:1021px;width:600px;text-align:right;margin-right:-0.1px;">2031</div>
<div class="t" style="top:256px;font-size:11.2px;line-height:15px;color:#fff;font-weight:bold;letter-spacing:0.1px;left:1021px;width:600px;text-align:right;margin-right:-0.1px;">10</div>
<div class="t" style="top:184px;font-size:11.2px;line-height:15px;color:#fff;font-weight:bold;letter-spacing:0.1px;left:1110px;width:600px;text-align:right;margin-right:-0.1px;">31 Dec 32</div>
<div class="t" style="top:202px;font-size:11.2px;line-height:15px;color:#111;font-weight:bold;letter-spacing:0.1px;left:1111px;width:600px;text-align:right;margin-right:-0.1px;">Ops.</div>
<div class="t" style="top:220px;font-size:11.2px;line-height:15px;color:#111;font-weight:bold;letter-spacing:0.1px;left:1113px;width:600px;text-align:right;margin-right:-0.1px;">Forecast</div>
<div class="t" style="top:238px;font-size:11.2px;line-height:15px;color:#fff;font-weight:bold;letter-spacing:0.1px;left:1110px;width:600px;text-align:right;margin-right:-0.1px;">2032</div>
<div class="t" style="top:256px;font-size:11.2px;line-height:15px;color:#fff;font-weight:bold;letter-spacing:0.1px;left:1110px;width:600px;text-align:right;margin-right:-0.1px;">11</div>
<div class="t" style="top:184px;font-size:11.2px;line-height:15px;color:#fff;font-weight:bold;letter-spacing:0.1px;left:1199px;width:600px;text-align:right;margin-right:-0.1px;">31 Dec 33</div>
<div class="t" style="top:202px;font-size:11.2px;line-height:15px;color:#111;font-weight:bold;letter-spacing:0.1px;left:1200px;width:600px;text-align:right;margin-right:-0.1px;">Ops.</div>
<div class="t" style="top:220px;font-size:11.2px;line-height:15px;color:#111;font-weight:bold;letter-spacing:0.1px;left:1202px;width:600px;text-align:right;margin-right:-0.1px;">Forecast</div>
<div class="t" style="top:238px;font-size:11.2px;line-height:15px;color:#fff;font-weight:bold;letter-spacing:0.1px;left:1199px;width:600px;text-align:right;margin-right:-0.1px;">2033</div>
<div class="t" style="top:256px;font-size:11.2px;line-height:15px;color:#fff;font-weight:bold;letter-spacing:0.1px;left:1199px;width:600px;text-align:right;margin-right:-0.1px;">12</div>
<div class="t" style="top:184px;font-size:11.2px;line-height:15px;color:#fff;font-weight:bold;letter-spacing:0.1px;left:1288px;width:600px;text-align:right;margin-right:-0.1px;">31 Dec 34</div>
<div class="t" style="top:202px;font-size:11.2px;line-height:15px;color:#111;font-weight:bold;letter-spacing:0.1px;left:1289px;width:600px;text-align:right;margin-right:-0.1px;">Ops.</div>
<div class="t" style="top:220px;font-size:11.2px;line-height:15px;color:#111;font-weight:bold;letter-spacing:0.1px;left:1291px;width:600px;text-align:right;margin-right:-0.1px;">Forecast</div>
<div class="t" style="top:238px;font-size:11.2px;line-height:15px;color:#fff;font-weight:bold;letter-spacing:0.1px;left:1288px;width:600px;text-align:right;margin-right:-0.1px;">2034</div>
<div class="t" style="top:256px;font-size:11.2px;line-height:15px;color:#fff;font-weight:bold;letter-spacing:0.1px;left:1288px;width:600px;text-align:right;margin-right:-0.1px;">13</div>
<div class="t" style="top:292px;font-size:11.2px;line-height:15px;color:#fff;font-weight:bold;letter-spacing:0.1px;left:70px;transform:scaleX(0.88);transform-origin:left top;">1. ASSETS</div>
<div class="t" style="top:328px;font-size:11.2px;line-height:15px;color:#000;font-weight:bold;letter-spacing:0.1px;left:70px;transform:scaleX(0.945);transform-origin:left top;">1.1. LONG TERM ASSET</div>
<div class="t" style="top:949px;font-size:11.2px;line-height:15px;color:#000;font-weight:bold;letter-spacing:0.1px;left:70px;transform:scaleX(0.91);transform-origin:left top;">1.2. CURRENT ASSETS</div>
<div class="t" style="top:364px;font-size:11.2px;line-height:15px;color:#000;font-weight:bold;letter-spacing:0.1px;left:80px;">1.1.1. Plant, property &amp; equipment balance</div>
<div class="t" style="top:536px;font-size:11.2px;line-height:15px;color:#000;font-weight:bold;letter-spacing:0.1px;left:80px;">1.1.2. Land balance</div>
<div class="t" style="top:708px;font-size:11.2px;line-height:15px;color:#000;font-weight:bold;letter-spacing:0.1px;left:80px;">1.1.3. Financial assets balance</div>
<div class="t" style="top:985px;font-size:11.2px;line-height:15px;color:#000;font-weight:bold;letter-spacing:0.1px;left:80px;">1.2.1. Trade debtors balance</div>
<div class="t" style="top:381px;font-size:12px;line-height:16px;color:#0000ff;letter-spacing:0.25px;left:110px;">Plant, property &amp; equipment balance [A]</div>
<div class="t" style="top:381px;font-size:12px;line-height:16px;color:#0000ff;letter-spacing:0.25px;left:-156px;width:600px;text-align:right;margin-right:-0.25px;">-</div>
<div class="t" style="top:381px;font-size:12px;line-height:16px;color:#0000ff;letter-spacing:0.25px;left:458px;">USD k</div>
<div class="t" style="top:381px;font-size:12px;line-height:16px;color:#0000ff;letter-spacing:0.25px;left:19px;width:600px;text-align:right;margin-right:-0.25px;">-</div>
<div class="t" style="top:381px;font-size:12px;line-height:16px;color:#0000ff;letter-spacing:0.25px;left:110px;width:600px;text-align:right;margin-right:-0.25px;">-</div>
<div class="t" style="top:381px;font-size:12px;line-height:16px;color:#0000ff;letter-spacing:0.25px;left:129px;width:600px;text-align:right;margin-right:-0.25px;">-</div>
<div class="t" style="top:381px;font-size:12px;line-height:16px;color:#0000ff;letter-spacing:0.25px;left:218px;width:600px;text-align:right;margin-right:-0.25px;">-</div>
<div class="t" style="top:381px;font-size:12px;line-height:16px;color:#0000ff;letter-spacing:0.25px;left:307px;width:600px;text-align:right;margin-right:-0.25px;">-</div>
<div class="t" style="top:381px;font-size:12px;line-height:16px;color:#0000ff;letter-spacing:0.25px;left:396px;width:600px;text-align:right;margin-right:-0.25px;">-</div>
<div class="t" style="top:381px;font-size:12px;line-height:16px;color:#0000ff;letter-spacing:0.25px;left:485px;width:600px;text-align:right;margin-right:-0.25px;">-</div>
<div class="t" style="top:381px;font-size:12px;line-height:16px;color:#0000ff;letter-spacing:0.25px;left:574px;width:600px;text-align:right;margin-right:-0.25px;">-</div>
<div class="t" style="top:381px;font-size:12px;line-height:16px;color:#0000ff;letter-spacing:0.25px;left:663px;width:600px;text-align:right;margin-right:-0.25px;">-</div>
<div class="t" style="top:381px;font-size:12px;line-height:16px;color:#0000ff;letter-spacing:0.25px;left:752px;width:600px;text-align:right;margin-right:-0.25px;">-</div>
<div class="t" style="top:381px;font-size:12px;line-height:16px;color:#0000ff;letter-spacing:0.25px;left:841px;width:600px;text-align:right;margin-right:-0.25px;">-</div>
<div class="t" style="top:381px;font-size:12px;line-height:16px;color:#0000ff;letter-spacing:0.25px;left:930px;width:600px;text-align:right;margin-right:-0.25px;">-</div>
<div class="t" style="top:381px;font-size:12px;line-height:16px;color:#0000ff;letter-spacing:0.25px;left:1019px;width:600px;text-align:right;margin-right:-0.25px;">-</div>
<div class="t" style="top:381px;font-size:12px;line-height:16px;color:#0000ff;letter-spacing:0.25px;left:1108px;width:600px;text-align:right;margin-right:-0.25px;">-</div>
<div class="t" style="top:381px;font-size:12px;line-height:16px;color:#0000ff;letter-spacing:0.25px;left:1197px;width:600px;text-align:right;margin-right:-0.25px;">-</div>
<div class="t" style="top:381px;font-size:12px;line-height:16px;color:#0000ff;letter-spacing:0.25px;left:1286px;width:600px;text-align:right;margin-right:-0.25px;">-</div>
<div class="t" style="top:398px;font-size:12px;line-height:16px;color:#0000ff;letter-spacing:0.25px;left:110px;">Actuals period flag</div>
<div class="t" style="top:398px;font-size:12px;line-height:16px;color:#0000ff;letter-spacing:0.25px;left:-156px;width:600px;text-align:right;margin-right:-0.25px;">-</div>
<div class="t" style="top:398px;font-size:12px;line-height:16px;color:#0000ff;letter-spacing:0.25px;left:458px;">flag</div>
<div class="t" style="top:398px;font-size:12px;line-height:16px;color:#0000ff;letter-spacing:0.25px;left:19px;width:600px;text-align:right;margin-right:-0.25px;">-</div>
<div class="t" style="top:398px;font-size:12px;line-height:16px;color:#0000ff;letter-spacing:0.25px;left:110px;width:600px;text-align:right;margin-right:-0.25px;">-</div>
<div class="t" style="top:398px;font-size:12px;line-height:16px;color:#0000ff;letter-spacing:0.25px;left:129px;width:600px;text-align:right;margin-right:-0.25px;">-</div>
<div class="t" style="top:398px;font-size:12px;line-height:16px;color:#0000ff;letter-spacing:0.25px;left:218px;width:600px;text-align:right;margin-right:-0.25px;">-</div>
<div class="t" style="top:398px;font-size:12px;line-height:16px;color:#0000ff;letter-spacing:0.25px;left:307px;width:600px;text-align:right;margin-right:-0.25px;">-</div>
<div class="t" style="top:398px;font-size:12px;line-height:16px;color:#0000ff;letter-spacing:0.25px;left:396px;width:600px;text-align:right;margin-right:-0.25px;">-</div>
<div class="t" style="top:398px;font-size:12px;line-height:16px;color:#0000ff;letter-spacing:0.25px;left:485px;width:600px;text-align:right;margin-right:-0.25px;">-</div>
<div class="t" style="top:398px;font-size:12px;line-height:16px;color:#0000ff;letter-spacing:0.25px;left:574px;width:600px;text-align:right;margin-right:-0.25px;">-</div>
<div class="t" style="top:398px;font-size:12px;line-height:16px;color:#0000ff;letter-spacing:0.25px;left:663px;width:600px;text-align:right;margin-right:-0.25px;">-</div>
<div class="t" style="top:398px;font-size:12px;line-height:16px;color:#0000ff;letter-spacing:0.25px;left:752px;width:600px;text-align:right;margin-right:-0.25px;">-</div>
<div class="t" style="top:398px;font-size:12px;line-height:16px;color:#0000ff;letter-spacing:0.25px;left:841px;width:600px;text-align:right;margin-right:-0.25px;">-</div>
<div class="t" style="top:398px;font-size:12px;line-height:16px;color:#0000ff;letter-spacing:0.25px;left:930px;width:600px;text-align:right;margin-right:-0.25px;">-</div>
<div class="t" style="top:398px;font-size:12px;line-height:16px;color:#0000ff;letter-spacing:0.25px;left:1019px;width:600px;text-align:right;margin-right:-0.25px;">-</div>
<div class="t" style="top:398px;font-size:12px;line-height:16px;color:#0000ff;letter-spacing:0.25px;left:1108px;width:600px;text-align:right;margin-right:-0.25px;">-</div>
<div class="t" style="top:398px;font-size:12px;line-height:16px;color:#0000ff;letter-spacing:0.25px;left:1197px;width:600px;text-align:right;margin-right:-0.25px;">-</div>
<div class="t" style="top:398px;font-size:12px;line-height:16px;color:#0000ff;letter-spacing:0.25px;left:1286px;width:600px;text-align:right;margin-right:-0.25px;">-</div>
<div class="t" style="top:432px;font-size:12px;line-height:16px;color:#ff0000;letter-spacing:0.25px;left:110px;">Plant, property &amp; equipment balance BEG</div>
<div class="t" style="top:432px;font-size:12px;line-height:16px;color:#ff0000;letter-spacing:0.25px;left:458px;">USD k</div>
<div class="t" style="top:432px;font-size:12px;line-height:16px;color:#ff0000;letter-spacing:0.25px;left:218px;width:600px;text-align:right;margin-right:-0.25px;">-</div>
<div class="t" style="top:432px;font-size:12px;line-height:16px;color:#ff0000;letter-spacing:0.25px;left:309px;width:600px;text-align:right;margin-right:-0.25px;">26,000</div>
<div class="t" style="top:432px;font-size:12px;line-height:16px;color:#ff0000;letter-spacing:0.25px;left:398px;width:600px;text-align:right;margin-right:-0.25px;">24,960</div>
<div class="t" style="top:432px;font-size:12px;line-height:16px;color:#ff0000;letter-spacing:0.25px;left:487px;width:600px;text-align:right;margin-right:-0.25px;">23,920</div>
<div class="t" style="top:432px;font-size:12px;line-height:16px;color:#ff0000;letter-spacing:0.25px;left:576px;width:600px;text-align:right;margin-right:-0.25px;">22,880</div>
<div class="t" style="top:432px;font-size:12px;line-height:16px;color:#ff0000;letter-spacing:0.25px;left:665px;width:600px;text-align:right;margin-right:-0.25px;">21,840</div>
<div class="t" style="top:432px;font-size:12px;line-height:16px;color:#ff0000;letter-spacing:0.25px;left:754px;width:600px;text-align:right;margin-right:-0.25px;">20,800</div>
<div class="t" style="top:432px;font-size:12px;line-height:16px;color:#ff0000;letter-spacing:0.25px;left:843px;width:600px;text-align:right;margin-right:-0.25px;">19,760</div>
<div class="t" style="top:432px;font-size:12px;line-height:16px;color:#ff0000;letter-spacing:0.25px;left:932px;width:600px;text-align:right;margin-right:-0.25px;">18,720</div>
<div class="t" style="top:432px;font-size:12px;line-height:16px;color:#ff0000;letter-spacing:0.25px;left:1021px;width:600px;text-align:right;margin-right:-0.25px;">17,680</div>
<div class="t" style="top:432px;font-size:12px;line-height:16px;color:#ff0000;letter-spacing:0.25px;left:1110px;width:600px;text-align:right;margin-right:-0.25px;">16,640</div>
<div class="t" style="top:432px;font-size:12px;line-height:16px;color:#ff0000;letter-spacing:0.25px;left:1199px;width:600px;text-align:right;margin-right:-0.25px;">15,600</div>
<div class="t" style="top:432px;font-size:12px;line-height:16px;color:#ff0000;letter-spacing:0.25px;left:1288px;width:600px;text-align:right;margin-right:-0.25px;">14,560</div>
<div class="t" style="top:449px;font-size:12px;line-height:16px;color:#222;letter-spacing:0.25px;left:-501px;width:600px;text-align:right;margin-right:-0.25px;">plus</div>
<div class="t" style="top:449px;font-size:12px;line-height:16px;color:#0000ff;letter-spacing:0.25px;left:110px;">Plant, property &amp; equipment</div>
<div class="t" style="top:449px;font-size:12px;line-height:16px;color:#0000ff;letter-spacing:0.25px;left:-156px;width:600px;text-align:right;margin-right:-0.25px;">-</div>
<div class="t" style="top:449px;font-size:12px;line-height:16px;color:#0000ff;letter-spacing:0.25px;left:458px;">USD k</div>
<div class="t" style="top:449px;font-size:12px;line-height:16px;color:#0000ff;letter-spacing:0.25px;left:19px;width:600px;text-align:right;margin-right:-0.25px;">-</div>
<div class="t" style="top:449px;font-size:12px;line-height:16px;color:#0000ff;letter-spacing:0.25px;left:112px;width:600px;text-align:right;margin-right:-0.25px;">26,000</div>
<div class="t" style="top:449px;font-size:12px;line-height:16px;color:#0000ff;letter-spacing:0.25px;left:129px;width:600px;text-align:right;margin-right:-0.25px;">-</div>
<div class="t" style="top:449px;font-size:12px;line-height:16px;color:#0000ff;letter-spacing:0.25px;left:220px;width:600px;text-align:right;margin-right:-0.25px;">26,000</div>
<div class="t" style="top:449px;font-size:12px;line-height:16px;color:#0000ff;letter-spacing:0.25px;left:307px;width:600px;text-align:right;margin-right:-0.25px;">-</div>
<div class="t" style="top:449px;font-size:12px;line-height:16px;color:#0000ff;letter-spacing:0.25px;left:396px;width:600px;text-align:right;margin-right:-0.25px;">-</div>
<div class="t" style="top:449px;font-size:12px;line-height:16px;color:#0000ff;letter-spacing:0.25px;left:485px;width:600px;text-align:right;margin-right:-0.25px;">-</div>
<div class="t" style="top:449px;font-size:12px;line-height:16px;color:#0000ff;letter-spacing:0.25px;left:574px;width:600px;text-align:right;margin-right:-0.25px;">-</div>
<div class="t" style="top:449px;font-size:12px;line-height:16px;color:#0000ff;letter-spacing:0.25px;left:663px;width:600px;text-align:right;margin-right:-0.25px;">-</div>
<div class="t" style="top:449px;font-size:12px;line-height:16px;color:#0000ff;letter-spacing:0.25px;left:752px;width:600px;text-align:right;margin-right:-0.25px;">-</div>
<div class="t" style="top:449px;font-size:12px;line-height:16px;color:#0000ff;letter-spacing:0.25px;left:841px;width:600px;text-align:right;margin-right:-0.25px;">-</div>
<div class="t" style="top:449px;font-size:12px;line-height:16px;color:#0000ff;letter-spacing:0.25px;left:930px;width:600px;text-align:right;margin-right:-0.25px;">-</div>
<div class="t" style="top:449px;font-size:12px;line-height:16px;color:#0000ff;letter-spacing:0.25px;left:1019px;width:600px;text-align:right;margin-right:-0.25px;">-</div>
<div class="t" style="top:449px;font-size:12px;line-height:16px;color:#0000ff;letter-spacing:0.25px;left:1108px;width:600px;text-align:right;margin-right:-0.25px;">-</div>
<div class="t" style="top:449px;font-size:12px;line-height:16px;color:#0000ff;letter-spacing:0.25px;left:1197px;width:600px;text-align:right;margin-right:-0.25px;">-</div>
<div class="t" style="top:449px;font-size:12px;line-height:16px;color:#0000ff;letter-spacing:0.25px;left:1286px;width:600px;text-align:right;margin-right:-0.25px;">-</div>
<div class="t" style="top:466px;font-size:12px;line-height:16px;color:#222;letter-spacing:0.25px;left:-501px;width:600px;text-align:right;margin-right:-0.25px;">less</div>
<div class="t" style="top:466px;font-size:12px;line-height:16px;color:#0000ff;letter-spacing:0.25px;left:110px;width:251px;overflow:hidden;">Plant, property &amp; equipment depreciation NEG</div>
<div class="t" style="top:466px;font-size:12px;line-height:16px;color:#0000ff;letter-spacing:0.25px;left:-156px;width:600px;text-align:right;margin-right:-0.25px;">-</div>
<div class="t" style="top:466px;font-size:12px;line-height:16px;color:#0000ff;letter-spacing:0.25px;left:458px;">USD k</div>
<div class="t" style="top:466px;font-size:12px;line-height:16px;color:#0000ff;letter-spacing:0.25px;left:19px;width:600px;text-align:right;margin-right:-0.25px;">-</div>
<div class="t" style="top:466px;font-size:12px;line-height:16px;color:#0000ff;letter-spacing:0.25px;left:116px;width:600px;text-align:right;margin-right:-0.25px;">(26,000)</div>
<div class="t" style="top:466px;font-size:12px;line-height:16px;color:#0000ff;letter-spacing:0.25px;left:129px;width:600px;text-align:right;margin-right:-0.25px;">-</div>
<div class="t" style="top:466px;font-size:12px;line-height:16px;color:#0000ff;letter-spacing:0.25px;left:218px;width:600px;text-align:right;margin-right:-0.25px;">-</div>
<div class="t" style="top:466px;font-size:12px;line-height:16px;color:#0000ff;letter-spacing:0.25px;left:313px;width:600px;text-align:right;margin-right:-0.25px;">(1,040)</div>
<div class="t" style="top:466px;font-size:12px;line-height:16px;color:#0000ff;letter-spacing:0.25px;left:402px;width:600px;text-align:right;margin-right:-0.25px;">(1,040)</div>
<div class="t" style="top:466px;font-size:12px;line-height:16px;color:#0000ff;letter-spacing:0.25px;left:491px;width:600px;text-align:right;margin-right:-0.25px;">(1,040)</div>
<div class="t" style="top:466px;font-size:12px;line-height:16px;color:#0000ff;letter-spacing:0.25px;left:580px;width:600px;text-align:right;margin-right:-0.25px;">(1,040)</div>
<div class="t" style="top:466px;font-size:12px;line-height:16px;color:#0000ff;letter-spacing:0.25px;left:669px;width:600px;text-align:right;margin-right:-0.25px;">(1,040)</div>
<div class="t" style="top:466px;font-size:12px;line-height:16px;color:#0000ff;letter-spacing:0.25px;left:758px;width:600px;text-align:right;margin-right:-0.25px;">(1,040)</div>
<div class="t" style="top:466px;font-size:12px;line-height:16px;color:#0000ff;letter-spacing:0.25px;left:847px;width:600px;text-align:right;margin-right:-0.25px;">(1,040)</div>
<div class="t" style="top:466px;font-size:12px;line-height:16px;color:#0000ff;letter-spacing:0.25px;left:936px;width:600px;text-align:right;margin-right:-0.25px;">(1,040)</div>
<div class="t" style="top:466px;font-size:12px;line-height:16px;color:#0000ff;letter-spacing:0.25px;left:1025px;width:600px;text-align:right;margin-right:-0.25px;">(1,040)</div>
<div class="t" style="top:466px;font-size:12px;line-height:16px;color:#0000ff;letter-spacing:0.25px;left:1114px;width:600px;text-align:right;margin-right:-0.25px;">(1,040)</div>
<div class="t" style="top:466px;font-size:12px;line-height:16px;color:#0000ff;letter-spacing:0.25px;left:1203px;width:600px;text-align:right;margin-right:-0.25px;">(1,040)</div>
<div class="t" style="top:466px;font-size:12px;line-height:16px;color:#0000ff;letter-spacing:0.25px;left:1292px;width:600px;text-align:right;margin-right:-0.25px;">(1,040)</div>
<div class="t" style="top:483px;font-size:12px;line-height:16px;color:#222;letter-spacing:0.25px;left:-501px;width:600px;text-align:right;margin-right:-0.25px;">less</div>
<div class="t" style="top:483px;font-size:12px;line-height:16px;color:#0000ff;letter-spacing:0.25px;left:110px;width:251px;overflow:hidden;">Sale / Reduction of Plant, property &amp; equipment NEG</div>
<div class="t" style="top:483px;font-size:12px;line-height:16px;color:#0000ff;letter-spacing:0.25px;left:-156px;width:600px;text-align:right;margin-right:-0.25px;">-</div>
<div class="t" style="top:483px;font-size:12px;line-height:16px;color:#0000ff;letter-spacing:0.25px;left:458px;">USD k</div>
<div class="t" style="top:483px;font-size:12px;line-height:16px;color:#0000ff;letter-spacing:0.25px;left:19px;width:600px;text-align:right;margin-right:-0.25px;">-</div>
<div class="t" style="top:483px;font-size:12px;line-height:16px;color:#0000ff;letter-spacing:0.25px;left:110px;width:600px;text-align:right;margin-right:-0.25px;">-</div>
<div class="t" style="top:483px;font-size:12px;line-height:16px;color:#0000ff;letter-spacing:0.25px;left:129px;width:600px;text-align:right;margin-right:-0.25px;">-</div>
<div class="t" style="top:483px;font-size:12px;line-height:16px;color:#0000ff;letter-spacing:0.25px;left:218px;width:600px;text-align:right;margin-right:-0.25px;">-</div>
<div class="t" style="top:483px;font-size:12px;line-height:16px;color:#0000ff;letter-spacing:0.25px;left:307px;width:600px;text-align:right;margin-right:-0.25px;">-</div>
<div class="t" style="top:483px;font-size:12px;line-height:16px;color:#0000ff;letter-spacing:0.25px;left:396px;width:600px;text-align:right;margin-right:-0.25px;">-</div>
<div class="t" style="top:483px;font-size:12px;line-height:16px;color:#0000ff;letter-spacing:0.25px;left:485px;width:600px;text-align:right;margin-right:-0.25px;">-</div>
<div class="t" style="top:483px;font-size:12px;line-height:16px;color:#0000ff;letter-spacing:0.25px;left:574px;width:600px;text-align:right;margin-right:-0.25px;">-</div>
<div class="t" style="top:483px;font-size:12px;line-height:16px;color:#0000ff;letter-spacing:0.25px;left:663px;width:600px;text-align:right;margin-right:-0.25px;">-</div>
<div class="t" style="top:483px;font-size:12px;line-height:16px;color:#0000ff;letter-spacing:0.25px;left:752px;width:600px;text-align:right;margin-right:-0.25px;">-</div>
<div class="t" style="top:483px;font-size:12px;line-height:16px;color:#0000ff;letter-spacing:0.25px;left:841px;width:600px;text-align:right;margin-right:-0.25px;">-</div>
<div class="t" style="top:483px;font-size:12px;line-height:16px;color:#0000ff;letter-spacing:0.25px;left:930px;width:600px;text-align:right;margin-right:-0.25px;">-</div>
<div class="t" style="top:483px;font-size:12px;line-height:16px;color:#0000ff;letter-spacing:0.25px;left:1019px;width:600px;text-align:right;margin-right:-0.25px;">-</div>
<div class="t" style="top:483px;font-size:12px;line-height:16px;color:#0000ff;letter-spacing:0.25px;left:1108px;width:600px;text-align:right;margin-right:-0.25px;">-</div>
<div class="t" style="top:483px;font-size:12px;line-height:16px;color:#0000ff;letter-spacing:0.25px;left:1197px;width:600px;text-align:right;margin-right:-0.25px;">-</div>
<div class="t" style="top:483px;font-size:12px;line-height:16px;color:#0000ff;letter-spacing:0.25px;left:1286px;width:600px;text-align:right;margin-right:-0.25px;">-</div>
<div class="t" style="top:500px;font-size:12px;line-height:16px;color:#ff0000;letter-spacing:0.25px;left:110px;">Plant, property &amp; equipment balance</div>
<div class="t" style="top:500px;font-size:12px;line-height:16px;color:#ff0000;letter-spacing:0.25px;left:458px;">USD k</div>
<div class="t" style="top:500px;font-size:12px;line-height:16px;color:#ff0000;letter-spacing:0.25px;left:220px;width:600px;text-align:right;margin-right:-0.25px;">26,000</div>
<div class="t" style="top:500px;font-size:12px;line-height:16px;color:#ff0000;letter-spacing:0.25px;left:309px;width:600px;text-align:right;margin-right:-0.25px;">24,960</div>
<div class="t" style="top:500px;font-size:12px;line-height:16px;color:#ff0000;letter-spacing:0.25px;left:398px;width:600px;text-align:right;margin-right:-0.25px;">23,920</div>
<div class="t" style="top:500px;font-size:12px;line-height:16px;color:#ff0000;letter-spacing:0.25px;left:487px;width:600px;text-align:right;margin-right:-0.25px;">22,880</div>
<div class="t" style="top:500px;font-size:12px;line-height:16px;color:#ff0000;letter-spacing:0.25px;left:576px;width:600px;text-align:right;margin-right:-0.25px;">21,840</div>
<div class="t" style="top:500px;font-size:12px;line-height:16px;color:#ff0000;letter-spacing:0.25px;left:665px;width:600px;text-align:right;margin-right:-0.25px;">20,800</div>
<div class="t" style="top:500px;font-size:12px;line-height:16px;color:#ff0000;letter-spacing:0.25px;left:754px;width:600px;text-align:right;margin-right:-0.25px;">19,760</div>
<div class="t" style="top:500px;font-size:12px;line-height:16px;color:#ff0000;letter-spacing:0.25px;left:843px;width:600px;text-align:right;margin-right:-0.25px;">18,720</div>
<div class="t" style="top:500px;font-size:12px;line-height:16px;color:#ff0000;letter-spacing:0.25px;left:932px;width:600px;text-align:right;margin-right:-0.25px;">17,680</div>
<div class="t" style="top:500px;font-size:12px;line-height:16px;color:#ff0000;letter-spacing:0.25px;left:1021px;width:600px;text-align:right;margin-right:-0.25px;">16,640</div>
<div class="t" style="top:500px;font-size:12px;line-height:16px;color:#ff0000;letter-spacing:0.25px;left:1110px;width:600px;text-align:right;margin-right:-0.25px;">15,600</div>
<div class="t" style="top:500px;font-size:12px;line-height:16px;color:#ff0000;letter-spacing:0.25px;left:1199px;width:600px;text-align:right;margin-right:-0.25px;">14,560</div>
<div class="t" style="top:500px;font-size:12px;line-height:16px;color:#ff0000;letter-spacing:0.25px;left:1288px;width:600px;text-align:right;margin-right:-0.25px;">13,520</div>
<div class="t" style="top:553px;font-size:12px;line-height:16px;color:#0000ff;letter-spacing:0.25px;left:110px;">Land balance [A]</div>
<div class="t" style="top:553px;font-size:12px;line-height:16px;color:#0000ff;letter-spacing:0.25px;left:-156px;width:600px;text-align:right;margin-right:-0.25px;">-</div>
<div class="t" style="top:553px;font-size:12px;line-height:16px;color:#0000ff;letter-spacing:0.25px;left:458px;">USD k</div>
<div class="t" style="top:553px;font-size:12px;line-height:16px;color:#0000ff;letter-spacing:0.25px;left:19px;width:600px;text-align:right;margin-right:-0.25px;">-</div>
<div class="t" style="top:553px;font-size:12px;line-height:16px;color:#0000ff;letter-spacing:0.25px;left:110px;width:600px;text-align:right;margin-right:-0.25px;">-</div>
<div class="t" style="top:553px;font-size:12px;line-height:16px;color:#0000ff;letter-spacing:0.25px;left:129px;width:600px;text-align:right;margin-right:-0.25px;">-</div>
<div class="t" style="top:553px;font-size:12px;line-height:16px;color:#0000ff;letter-spacing:0.25px;left:218px;width:600px;text-align:right;margin-right:-0.25px;">-</div>
<div class="t" style="top:553px;font-size:12px;line-height:16px;color:#0000ff;letter-spacing:0.25px;left:307px;width:600px;text-align:right;margin-right:-0.25px;">-</div>
<div class="t" style="top:553px;font-size:12px;line-height:16px;color:#0000ff;letter-spacing:0.25px;left:396px;width:600px;text-align:right;margin-right:-0.25px;">-</div>
<div class="t" style="top:553px;font-size:12px;line-height:16px;color:#0000ff;letter-spacing:0.25px;left:485px;width:600px;text-align:right;margin-right:-0.25px;">-</div>
<div class="t" style="top:553px;font-size:12px;line-height:16px;color:#0000ff;letter-spacing:0.25px;left:574px;width:600px;text-align:right;margin-right:-0.25px;">-</div>
<div class="t" style="top:553px;font-size:12px;line-height:16px;color:#0000ff;letter-spacing:0.25px;left:663px;width:600px;text-align:right;margin-right:-0.25px;">-</div>
<div class="t" style="top:553px;font-size:12px;line-height:16px;color:#0000ff;letter-spacing:0.25px;left:752px;width:600px;text-align:right;margin-right:-0.25px;">-</div>
<div class="t" style="top:553px;font-size:12px;line-height:16px;color:#0000ff;letter-spacing:0.25px;left:841px;width:600px;text-align:right;margin-right:-0.25px;">-</div>
<div class="t" style="top:553px;font-size:12px;line-height:16px;color:#0000ff;letter-spacing:0.25px;left:930px;width:600px;text-align:right;margin-right:-0.25px;">-</div>
<div class="t" style="top:553px;font-size:12px;line-height:16px;color:#0000ff;letter-spacing:0.25px;left:1019px;width:600px;text-align:right;margin-right:-0.25px;">-</div>
<div class="t" style="top:553px;font-size:12px;line-height:16px;color:#0000ff;letter-spacing:0.25px;left:1108px;width:600px;text-align:right;margin-right:-0.25px;">-</div>
<div class="t" style="top:553px;font-size:12px;line-height:16px;color:#0000ff;letter-spacing:0.25px;left:1197px;width:600px;text-align:right;margin-right:-0.25px;">-</div>
<div class="t" style="top:553px;font-size:12px;line-height:16px;color:#0000ff;letter-spacing:0.25px;left:1286px;width:600px;text-align:right;margin-right:-0.25px;">-</div>
<div class="t" style="top:570px;font-size:12px;line-height:16px;color:#0000ff;letter-spacing:0.25px;left:110px;">Actuals period flag</div>
<div class="t" style="top:570px;font-size:12px;line-height:16px;color:#0000ff;letter-spacing:0.25px;left:-156px;width:600px;text-align:right;margin-right:-0.25px;">-</div>
<div class="t" style="top:570px;font-size:12px;line-height:16px;color:#0000ff;letter-spacing:0.25px;left:458px;">flag</div>
<div class="t" style="top:570px;font-size:12px;line-height:16px;color:#0000ff;letter-spacing:0.25px;left:19px;width:600px;text-align:right;margin-right:-0.25px;">-</div>
<div class="t" style="top:570px;font-size:12px;line-height:16px;color:#0000ff;letter-spacing:0.25px;left:110px;width:600px;text-align:right;margin-right:-0.25px;">-</div>
<div class="t" style="top:570px;font-size:12px;line-height:16px;color:#0000ff;letter-spacing:0.25px;left:129px;width:600px;text-align:right;margin-right:-0.25px;">-</div>
<div class="t" style="top:570px;font-size:12px;line-height:16px;color:#0000ff;letter-spacing:0.25px;left:218px;width:600px;text-align:right;margin-right:-0.25px;">-</div>
<div class="t" style="top:570px;font-size:12px;line-height:16px;color:#0000ff;letter-spacing:0.25px;left:307px;width:600px;text-align:right;margin-right:-0.25px;">-</div>
<div class="t" style="top:570px;font-size:12px;line-height:16px;color:#0000ff;letter-spacing:0.25px;left:396px;width:600px;text-align:right;margin-right:-0.25px;">-</div>
<div class="t" style="top:570px;font-size:12px;line-height:16px;color:#0000ff;letter-spacing:0.25px;left:485px;width:600px;text-align:right;margin-right:-0.25px;">-</div>
<div class="t" style="top:570px;font-size:12px;line-height:16px;color:#0000ff;letter-spacing:0.25px;left:574px;width:600px;text-align:right;margin-right:-0.25px;">-</div>
<div class="t" style="top:570px;font-size:12px;line-height:16px;color:#0000ff;letter-spacing:0.25px;left:663px;width:600px;text-align:right;margin-right:-0.25px;">-</div>
<div class="t" style="top:570px;font-size:12px;line-height:16px;color:#0000ff;letter-spacing:0.25px;left:752px;width:600px;text-align:right;margin-right:-0.25px;">-</div>
<div class="t" style="top:570px;font-size:12px;line-height:16px;color:#0000ff;letter-spacing:0.25px;left:841px;width:600px;text-align:right;margin-right:-0.25px;">-</div>
<div class="t" style="top:570px;font-size:12px;line-height:16px;color:#0000ff;letter-spacing:0.25px;left:930px;width:600px;text-align:right;margin-right:-0.25px;">-</div>
<div class="t" style="top:570px;font-size:12px;line-height:16px;color:#0000ff;letter-spacing:0.25px;left:1019px;width:600px;text-align:right;margin-right:-0.25px;">-</div>
<div class="t" style="top:570px;font-size:12px;line-height:16px;color:#0000ff;letter-spacing:0.25px;left:1108px;width:600px;text-align:right;margin-right:-0.25px;">-</div>
<div class="t" style="top:570px;font-size:12px;line-height:16px;color:#0000ff;letter-spacing:0.25px;left:1197px;width:600px;text-align:right;margin-right:-0.25px;">-</div>
<div class="t" style="top:570px;font-size:12px;line-height:16px;color:#0000ff;letter-spacing:0.25px;left:1286px;width:600px;text-align:right;margin-right:-0.25px;">-</div>
<div class="t" style="top:604px;font-size:12px;line-height:16px;color:#ff0000;letter-spacing:0.25px;left:110px;">Land balance BEG</div>
<div class="t" style="top:604px;font-size:12px;line-height:16px;color:#ff0000;letter-spacing:0.25px;left:458px;">USD k</div>
<div class="t" style="top:604px;font-size:12px;line-height:16px;color:#ff0000;letter-spacing:0.25px;left:218px;width:600px;text-align:right;margin-right:-0.25px;">-</div>
<div class="t" style="top:604px;font-size:12px;line-height:16px;color:#ff0000;letter-spacing:0.25px;left:309px;width:600px;text-align:right;margin-right:-0.25px;">1,000</div>
<div class="t" style="top:604px;font-size:12px;line-height:16px;color:#ff0000;letter-spacing:0.25px;left:398px;width:600px;text-align:right;margin-right:-0.25px;">1,000</div>
<div class="t" style="top:604px;font-size:12px;line-height:16px;color:#ff0000;letter-spacing:0.25px;left:487px;width:600px;text-align:right;margin-right:-0.25px;">1,000</div>
<div class="t" style="top:604px;font-size:12px;line-height:16px;color:#ff0000;letter-spacing:0.25px;left:576px;width:600px;text-align:right;margin-right:-0.25px;">1,000</div>
<div class="t" style="top:604px;font-size:12px;line-height:16px;color:#ff0000;letter-spacing:0.25px;left:665px;width:600px;text-align:right;margin-right:-0.25px;">1,000</div>
<div class="t" style="top:604px;font-size:12px;line-height:16px;color:#ff0000;letter-spacing:0.25px;left:754px;width:600px;text-align:right;margin-right:-0.25px;">1,000</div>
<div class="t" style="top:604px;font-size:12px;line-height:16px;color:#ff0000;letter-spacing:0.25px;left:843px;width:600px;text-align:right;margin-right:-0.25px;">1,000</div>
<div class="t" style="top:604px;font-size:12px;line-height:16px;color:#ff0000;letter-spacing:0.25px;left:932px;width:600px;text-align:right;margin-right:-0.25px;">1,000</div>
<div class="t" style="top:604px;font-size:12px;line-height:16px;color:#ff0000;letter-spacing:0.25px;left:1021px;width:600px;text-align:right;margin-right:-0.25px;">1,000</div>
<div class="t" style="top:604px;font-size:12px;line-height:16px;color:#ff0000;letter-spacing:0.25px;left:1110px;width:600px;text-align:right;margin-right:-0.25px;">1,000</div>
<div class="t" style="top:604px;font-size:12px;line-height:16px;color:#ff0000;letter-spacing:0.25px;left:1199px;width:600px;text-align:right;margin-right:-0.25px;">1,000</div>
<div class="t" style="top:604px;font-size:12px;line-height:16px;color:#ff0000;letter-spacing:0.25px;left:1288px;width:600px;text-align:right;margin-right:-0.25px;">1,000</div>
<div class="t" style="top:621px;font-size:12px;line-height:16px;color:#222;letter-spacing:0.25px;left:-501px;width:600px;text-align:right;margin-right:-0.25px;">plus</div>
<div class="t" style="top:621px;font-size:12px;line-height:16px;color:#0000ff;letter-spacing:0.25px;left:110px;">Land</div>
<div class="t" style="top:621px;font-size:12px;line-height:16px;color:#0000ff;letter-spacing:0.25px;left:-156px;width:600px;text-align:right;margin-right:-0.25px;">-</div>
<div class="t" style="top:621px;font-size:12px;line-height:16px;color:#0000ff;letter-spacing:0.25px;left:458px;">USD k</div>
<div class="t" style="top:621px;font-size:12px;line-height:16px;color:#0000ff;letter-spacing:0.25px;left:19px;width:600px;text-align:right;margin-right:-0.25px;">-</div>
<div class="t" style="top:621px;font-size:12px;line-height:16px;color:#0000ff;letter-spacing:0.25px;left:112px;width:600px;text-align:right;margin-right:-0.25px;">1,000</div>
<div class="t" style="top:621px;font-size:12px;line-height:16px;color:#0000ff;letter-spacing:0.25px;left:129px;width:600px;text-align:right;margin-right:-0.25px;">-</div>
<div class="t" style="top:621px;font-size:12px;line-height:16px;color:#0000ff;letter-spacing:0.25px;left:220px;width:600px;text-align:right;margin-right:-0.25px;">1,000</div>
<div class="t" style="top:621px;font-size:12px;line-height:16px;color:#0000ff;letter-spacing:0.25px;left:307px;width:600px;text-align:right;margin-right:-0.25px;">-</div>
<div class="t" style="top:621px;font-size:12px;line-height:16px;color:#0000ff;letter-spacing:0.25px;left:396px;width:600px;text-align:right;margin-right:-0.25px;">-</div>
<div class="t" style="top:621px;font-size:12px;line-height:16px;color:#0000ff;letter-spacing:0.25px;left:485px;width:600px;text-align:right;margin-right:-0.25px;">-</div>
<div class="t" style="top:621px;font-size:12px;line-height:16px;color:#0000ff;letter-spacing:0.25px;left:574px;width:600px;text-align:right;margin-right:-0.25px;">-</div>
<div class="t" style="top:621px;font-size:12px;line-height:16px;color:#0000ff;letter-spacing:0.25px;left:663px;width:600px;text-align:right;margin-right:-0.25px;">-</div>
<div class="t" style="top:621px;font-size:12px;line-height:16px;color:#0000ff;letter-spacing:0.25px;left:752px;width:600px;text-align:right;margin-right:-0.25px;">-</div>
<div class="t" style="top:621px;font-size:12px;line-height:16px;color:#0000ff;letter-spacing:0.25px;left:841px;width:600px;text-align:right;margin-right:-0.25px;">-</div>
<div class="t" style="top:621px;font-size:12px;line-height:16px;color:#0000ff;letter-spacing:0.25px;left:930px;width:600px;text-align:right;margin-right:-0.25px;">-</div>
<div class="t" style="top:621px;font-size:12px;line-height:16px;color:#0000ff;letter-spacing:0.25px;left:1019px;width:600px;text-align:right;margin-right:-0.25px;">-</div>
<div class="t" style="top:621px;font-size:12px;line-height:16px;color:#0000ff;letter-spacing:0.25px;left:1108px;width:600px;text-align:right;margin-right:-0.25px;">-</div>
<div class="t" style="top:621px;font-size:12px;line-height:16px;color:#0000ff;letter-spacing:0.25px;left:1197px;width:600px;text-align:right;margin-right:-0.25px;">-</div>
<div class="t" style="top:621px;font-size:12px;line-height:16px;color:#0000ff;letter-spacing:0.25px;left:1286px;width:600px;text-align:right;margin-right:-0.25px;">-</div>
<div class="t" style="top:638px;font-size:12px;line-height:16px;color:#222;letter-spacing:0.25px;left:-501px;width:600px;text-align:right;margin-right:-0.25px;">less</div>
<div class="t" style="top:638px;font-size:12px;line-height:16px;color:#0000ff;letter-spacing:0.25px;left:110px;">Land depreciation NEG</div>
<div class="t" style="top:638px;font-size:12px;line-height:16px;color:#0000ff;letter-spacing:0.25px;left:-156px;width:600px;text-align:right;margin-right:-0.25px;">-</div>
<div class="t" style="top:638px;font-size:12px;line-height:16px;color:#0000ff;letter-spacing:0.25px;left:458px;">USD k</div>
<div class="t" style="top:638px;font-size:12px;line-height:16px;color:#0000ff;letter-spacing:0.25px;left:19px;width:600px;text-align:right;margin-right:-0.25px;">-</div>
<div class="t" style="top:638px;font-size:12px;line-height:16px;color:#0000ff;letter-spacing:0.25px;left:110px;width:600px;text-align:right;margin-right:-0.25px;">-</div>
<div class="t" style="top:638px;font-size:12px;line-height:16px;color:#0000ff;letter-spacing:0.25px;left:129px;width:600px;text-align:right;margin-right:-0.25px;">-</div>
<div class="t" style="top:638px;font-size:12px;line-height:16px;color:#0000ff;letter-spacing:0.25px;left:218px;width:600px;text-align:right;margin-right:-0.25px;">-</div>
<div class="t" style="top:638px;font-size:12px;line-height:16px;color:#0000ff;letter-spacing:0.25px;left:307px;width:600px;text-align:right;margin-right:-0.25px;">-</div>
<div class="t" style="top:638px;font-size:12px;line-height:16px;color:#0000ff;letter-spacing:0.25px;left:396px;width:600px;text-align:right;margin-right:-0.25px;">-</div>
<div class="t" style="top:638px;font-size:12px;line-height:16px;color:#0000ff;letter-spacing:0.25px;left:485px;width:600px;text-align:right;margin-right:-0.25px;">-</div>
<div class="t" style="top:638px;font-size:12px;line-height:16px;color:#0000ff;letter-spacing:0.25px;left:574px;width:600px;text-align:right;margin-right:-0.25px;">-</div>
<div class="t" style="top:638px;font-size:12px;line-height:16px;color:#0000ff;letter-spacing:0.25px;left:663px;width:600px;text-align:right;margin-right:-0.25px;">-</div>
<div class="t" style="top:638px;font-size:12px;line-height:16px;color:#0000ff;letter-spacing:0.25px;left:752px;width:600px;text-align:right;margin-right:-0.25px;">-</div>
<div class="t" style="top:638px;font-size:12px;line-height:16px;color:#0000ff;letter-spacing:0.25px;left:841px;width:600px;text-align:right;margin-right:-0.25px;">-</div>
<div class="t" style="top:638px;font-size:12px;line-height:16px;color:#0000ff;letter-spacing:0.25px;left:930px;width:600px;text-align:right;margin-right:-0.25px;">-</div>
<div class="t" style="top:638px;font-size:12px;line-height:16px;color:#0000ff;letter-spacing:0.25px;left:1019px;width:600px;text-align:right;margin-right:-0.25px;">-</div>
<div class="t" style="top:638px;font-size:12px;line-height:16px;color:#0000ff;letter-spacing:0.25px;left:1108px;width:600px;text-align:right;margin-right:-0.25px;">-</div>
<div class="t" style="top:638px;font-size:12px;line-height:16px;color:#0000ff;letter-spacing:0.25px;left:1197px;width:600px;text-align:right;margin-right:-0.25px;">-</div>
<div class="t" style="top:638px;font-size:12px;line-height:16px;color:#0000ff;letter-spacing:0.25px;left:1286px;width:600px;text-align:right;margin-right:-0.25px;">-</div>
<div class="t" style="top:655px;font-size:12px;line-height:16px;color:#222;letter-spacing:0.25px;left:-501px;width:600px;text-align:right;margin-right:-0.25px;">less</div>
<div class="t" style="top:655px;font-size:12px;line-height:16px;color:#0000ff;letter-spacing:0.25px;left:110px;">Sale / Reduction of Land NEG</div>
<div class="t" style="top:655px;font-size:12px;line-height:16px;color:#0000ff;letter-spacing:0.25px;left:-156px;width:600px;text-align:right;margin-right:-0.25px;">-</div>
<div class="t" style="top:655px;font-size:12px;line-height:16px;color:#0000ff;letter-spacing:0.25px;left:458px;">USD k</div>
<div class="t" style="top:655px;font-size:12px;line-height:16px;color:#0000ff;letter-spacing:0.25px;left:19px;width:600px;text-align:right;margin-right:-0.25px;">-</div>
<div class="t" style="top:655px;font-size:12px;line-height:16px;color:#0000ff;letter-spacing:0.25px;left:116px;width:600px;text-align:right;margin-right:-0.25px;">(1,000)</div>
<div class="t" style="top:655px;font-size:12px;line-height:16px;color:#0000ff;letter-spacing:0.25px;left:129px;width:600px;text-align:right;margin-right:-0.25px;">-</div>
<div class="t" style="top:655px;font-size:12px;line-height:16px;color:#0000ff;letter-spacing:0.25px;left:218px;width:600px;text-align:right;margin-right:-0.25px;">-</div>
<div class="t" style="top:655px;font-size:12px;line-height:16px;color:#0000ff;letter-spacing:0.25px;left:307px;width:600px;text-align:right;margin-right:-0.25px;">-</div>
<div class="t" style="top:655px;font-size:12px;line-height:16px;color:#0000ff;letter-spacing:0.25px;left:396px;width:600px;text-align:right;margin-right:-0.25px;">-</div>
<div class="t" style="top:655px;font-size:12px;line-height:16px;color:#0000ff;letter-spacing:0.25px;left:485px;width:600px;text-align:right;margin-right:-0.25px;">-</div>
<div class="t" style="top:655px;font-size:12px;line-height:16px;color:#0000ff;letter-spacing:0.25px;left:574px;width:600px;text-align:right;margin-right:-0.25px;">-</div>
<div class="t" style="top:655px;font-size:12px;line-height:16px;color:#0000ff;letter-spacing:0.25px;left:663px;width:600px;text-align:right;margin-right:-0.25px;">-</div>
<div class="t" style="top:655px;font-size:12px;line-height:16px;color:#0000ff;letter-spacing:0.25px;left:752px;width:600px;text-align:right;margin-right:-0.25px;">-</div>
<div class="t" style="top:655px;font-size:12px;line-height:16px;color:#0000ff;letter-spacing:0.25px;left:841px;width:600px;text-align:right;margin-right:-0.25px;">-</div>
<div class="t" style="top:655px;font-size:12px;line-height:16px;color:#0000ff;letter-spacing:0.25px;left:930px;width:600px;text-align:right;margin-right:-0.25px;">-</div>
<div class="t" style="top:655px;font-size:12px;line-height:16px;color:#0000ff;letter-spacing:0.25px;left:1019px;width:600px;text-align:right;margin-right:-0.25px;">-</div>
<div class="t" style="top:655px;font-size:12px;line-height:16px;color:#0000ff;letter-spacing:0.25px;left:1108px;width:600px;text-align:right;margin-right:-0.25px;">-</div>
<div class="t" style="top:655px;font-size:12px;line-height:16px;color:#0000ff;letter-spacing:0.25px;left:1197px;width:600px;text-align:right;margin-right:-0.25px;">-</div>
<div class="t" style="top:655px;font-size:12px;line-height:16px;color:#0000ff;letter-spacing:0.25px;left:1286px;width:600px;text-align:right;margin-right:-0.25px;">-</div>
<div class="t" style="top:672px;font-size:12px;line-height:16px;color:#ff0000;letter-spacing:0.25px;left:110px;">Land balance</div>
<div class="t" style="top:672px;font-size:12px;line-height:16px;color:#ff0000;letter-spacing:0.25px;left:458px;">USD k</div>
<div class="t" style="top:672px;font-size:12px;line-height:16px;color:#ff0000;letter-spacing:0.25px;left:220px;width:600px;text-align:right;margin-right:-0.25px;">1,000</div>
<div class="t" style="top:672px;font-size:12px;line-height:16px;color:#ff0000;letter-spacing:0.25px;left:309px;width:600px;text-align:right;margin-right:-0.25px;">1,000</div>
<div class="t" style="top:672px;font-size:12px;line-height:16px;color:#ff0000;letter-spacing:0.25px;left:398px;width:600px;text-align:right;margin-right:-0.25px;">1,000</div>
<div class="t" style="top:672px;font-size:12px;line-height:16px;color:#ff0000;letter-spacing:0.25px;left:487px;width:600px;text-align:right;margin-right:-0.25px;">1,000</div>
<div class="t" style="top:672px;font-size:12px;line-height:16px;color:#ff0000;letter-spacing:0.25px;left:576px;width:600px;text-align:right;margin-right:-0.25px;">1,000</div>
<div class="t" style="top:672px;font-size:12px;line-height:16px;color:#ff0000;letter-spacing:0.25px;left:665px;width:600px;text-align:right;margin-right:-0.25px;">1,000</div>
<div class="t" style="top:672px;font-size:12px;line-height:16px;color:#ff0000;letter-spacing:0.25px;left:754px;width:600px;text-align:right;margin-right:-0.25px;">1,000</div>
<div class="t" style="top:672px;font-size:12px;line-height:16px;color:#ff0000;letter-spacing:0.25px;left:843px;width:600px;text-align:right;margin-right:-0.25px;">1,000</div>
<div class="t" style="top:672px;font-size:12px;line-height:16px;color:#ff0000;letter-spacing:0.25px;left:932px;width:600px;text-align:right;margin-right:-0.25px;">1,000</div>
<div class="t" style="top:672px;font-size:12px;line-height:16px;color:#ff0000;letter-spacing:0.25px;left:1021px;width:600px;text-align:right;margin-right:-0.25px;">1,000</div>
<div class="t" style="top:672px;font-size:12px;line-height:16px;color:#ff0000;letter-spacing:0.25px;left:1110px;width:600px;text-align:right;margin-right:-0.25px;">1,000</div>
<div class="t" style="top:672px;font-size:12px;line-height:16px;color:#ff0000;letter-spacing:0.25px;left:1199px;width:600px;text-align:right;margin-right:-0.25px;">1,000</div>
<div class="t" style="top:672px;font-size:12px;line-height:16px;color:#ff0000;letter-spacing:0.25px;left:1288px;width:600px;text-align:right;margin-right:-0.25px;">1,000</div>
<div class="t" style="top:725px;font-size:12px;line-height:16px;color:#0000ff;letter-spacing:0.25px;left:110px;">Financial assets balance [A]</div>
<div class="t" style="top:725px;font-size:12px;line-height:16px;color:#0000ff;letter-spacing:0.25px;left:-156px;width:600px;text-align:right;margin-right:-0.25px;">-</div>
<div class="t" style="top:725px;font-size:12px;line-height:16px;color:#0000ff;letter-spacing:0.25px;left:458px;">USD k</div>
<div class="t" style="top:725px;font-size:12px;line-height:16px;color:#0000ff;letter-spacing:0.25px;left:19px;width:600px;text-align:right;margin-right:-0.25px;">-</div>
<div class="t" style="top:725px;font-size:12px;line-height:16px;color:#0000ff;letter-spacing:0.25px;left:110px;width:600px;text-align:right;margin-right:-0.25px;">-</div>
<div class="t" style="top:725px;font-size:12px;line-height:16px;color:#0000ff;letter-spacing:0.25px;left:129px;width:600px;text-align:right;margin-right:-0.25px;">-</div>
<div class="t" style="top:725px;font-size:12px;line-height:16px;color:#0000ff;letter-spacing:0.25px;left:218px;width:600px;text-align:right;margin-right:-0.25px;">-</div>
<div class="t" style="top:725px;font-size:12px;line-height:16px;color:#0000ff;letter-spacing:0.25px;left:307px;width:600px;text-align:right;margin-right:-0.25px;">-</div>
<div class="t" style="top:725px;font-size:12px;line-height:16px;color:#0000ff;letter-spacing:0.25px;left:396px;width:600px;text-align:right;margin-right:-0.25px;">-</div>
<div class="t" style="top:725px;font-size:12px;line-height:16px;color:#0000ff;letter-spacing:0.25px;left:485px;width:600px;text-align:right;margin-right:-0.25px;">-</div>
<div class="t" style="top:725px;font-size:12px;line-height:16px;color:#0000ff;letter-spacing:0.25px;left:574px;width:600px;text-align:right;margin-right:-0.25px;">-</div>
<div class="t" style="top:725px;font-size:12px;line-height:16px;color:#0000ff;letter-spacing:0.25px;left:663px;width:600px;text-align:right;margin-right:-0.25px;">-</div>
<div class="t" style="top:725px;font-size:12px;line-height:16px;color:#0000ff;letter-spacing:0.25px;left:752px;width:600px;text-align:right;margin-right:-0.25px;">-</div>
<div class="t" style="top:725px;font-size:12px;line-height:16px;color:#0000ff;letter-spacing:0.25px;left:841px;width:600px;text-align:right;margin-right:-0.25px;">-</div>
<div class="t" style="top:725px;font-size:12px;line-height:16px;color:#0000ff;letter-spacing:0.25px;left:930px;width:600px;text-align:right;margin-right:-0.25px;">-</div>
<div class="t" style="top:725px;font-size:12px;line-height:16px;color:#0000ff;letter-spacing:0.25px;left:1019px;width:600px;text-align:right;margin-right:-0.25px;">-</div>
<div class="t" style="top:725px;font-size:12px;line-height:16px;color:#0000ff;letter-spacing:0.25px;left:1108px;width:600px;text-align:right;margin-right:-0.25px;">-</div>
<div class="t" style="top:725px;font-size:12px;line-height:16px;color:#0000ff;letter-spacing:0.25px;left:1197px;width:600px;text-align:right;margin-right:-0.25px;">-</div>
<div class="t" style="top:725px;font-size:12px;line-height:16px;color:#0000ff;letter-spacing:0.25px;left:1286px;width:600px;text-align:right;margin-right:-0.25px;">-</div>
<div class="t" style="top:742px;font-size:12px;line-height:16px;color:#0000ff;letter-spacing:0.25px;left:110px;">Actuals period flag</div>
<div class="t" style="top:742px;font-size:12px;line-height:16px;color:#0000ff;letter-spacing:0.25px;left:-156px;width:600px;text-align:right;margin-right:-0.25px;">-</div>
<div class="t" style="top:742px;font-size:12px;line-height:16px;color:#0000ff;letter-spacing:0.25px;left:458px;">flag</div>
<div class="t" style="top:742px;font-size:12px;line-height:16px;color:#0000ff;letter-spacing:0.25px;left:19px;width:600px;text-align:right;margin-right:-0.25px;">-</div>
<div class="t" style="top:742px;font-size:12px;line-height:16px;color:#0000ff;letter-spacing:0.25px;left:110px;width:600px;text-align:right;margin-right:-0.25px;">-</div>
<div class="t" style="top:742px;font-size:12px;line-height:16px;color:#0000ff;letter-spacing:0.25px;left:129px;width:600px;text-align:right;margin-right:-0.25px;">-</div>
<div class="t" style="top:742px;font-size:12px;line-height:16px;color:#0000ff;letter-spacing:0.25px;left:218px;width:600px;text-align:right;margin-right:-0.25px;">-</div>
<div class="t" style="top:742px;font-size:12px;line-height:16px;color:#0000ff;letter-spacing:0.25px;left:307px;width:600px;text-align:right;margin-right:-0.25px;">-</div>
<div class="t" style="top:742px;font-size:12px;line-height:16px;color:#0000ff;letter-spacing:0.25px;left:396px;width:600px;text-align:right;margin-right:-0.25px;">-</div>
<div class="t" style="top:742px;font-size:12px;line-height:16px;color:#0000ff;letter-spacing:0.25px;left:485px;width:600px;text-align:right;margin-right:-0.25px;">-</div>
<div class="t" style="top:742px;font-size:12px;line-height:16px;color:#0000ff;letter-spacing:0.25px;left:574px;width:600px;text-align:right;margin-right:-0.25px;">-</div>
<div class="t" style="top:742px;font-size:12px;line-height:16px;color:#0000ff;letter-spacing:0.25px;left:663px;width:600px;text-align:right;margin-right:-0.25px;">-</div>
<div class="t" style="top:742px;font-size:12px;line-height:16px;color:#0000ff;letter-spacing:0.25px;left:752px;width:600px;text-align:right;margin-right:-0.25px;">-</div>
<div class="t" style="top:742px;font-size:12px;line-height:16px;color:#0000ff;letter-spacing:0.25px;left:841px;width:600px;text-align:right;margin-right:-0.25px;">-</div>
<div class="t" style="top:742px;font-size:12px;line-height:16px;color:#0000ff;letter-spacing:0.25px;left:930px;width:600px;text-align:right;margin-right:-0.25px;">-</div>
<div class="t" style="top:742px;font-size:12px;line-height:16px;color:#0000ff;letter-spacing:0.25px;left:1019px;width:600px;text-align:right;margin-right:-0.25px;">-</div>
<div class="t" style="top:742px;font-size:12px;line-height:16px;color:#0000ff;letter-spacing:0.25px;left:1108px;width:600px;text-align:right;margin-right:-0.25px;">-</div>
<div class="t" style="top:742px;font-size:12px;line-height:16px;color:#0000ff;letter-spacing:0.25px;left:1197px;width:600px;text-align:right;margin-right:-0.25px;">-</div>
<div class="t" style="top:742px;font-size:12px;line-height:16px;color:#0000ff;letter-spacing:0.25px;left:1286px;width:600px;text-align:right;margin-right:-0.25px;">-</div>
<div class="t" style="top:776px;font-size:12px;line-height:16px;color:#000;letter-spacing:0.25px;left:110px;">Financial assets balance BEG</div>
<div class="t" style="top:776px;font-size:12px;line-height:16px;color:#000;letter-spacing:0.25px;left:458px;">USD k</div>
<div class="t" style="top:776px;font-size:12px;line-height:16px;color:#000;letter-spacing:0.25px;left:218px;width:600px;text-align:right;margin-right:-0.25px;">-</div>
<div class="t" style="top:776px;font-size:12px;line-height:16px;color:#000;letter-spacing:0.25px;left:309px;width:600px;text-align:right;margin-right:-0.25px;">981</div>
<div class="t" style="top:776px;font-size:12px;line-height:16px;color:#000;letter-spacing:0.25px;left:398px;width:600px;text-align:right;margin-right:-0.25px;">932</div>
<div class="t" style="top:776px;font-size:12px;line-height:16px;color:#000;letter-spacing:0.25px;left:487px;width:600px;text-align:right;margin-right:-0.25px;">883</div>
<div class="t" style="top:776px;font-size:12px;line-height:16px;color:#000;letter-spacing:0.25px;left:576px;width:600px;text-align:right;margin-right:-0.25px;">834</div>
<div class="t" style="top:776px;font-size:12px;line-height:16px;color:#000;letter-spacing:0.25px;left:665px;width:600px;text-align:right;margin-right:-0.25px;">785</div>
<div class="t" style="top:776px;font-size:12px;line-height:16px;color:#000;letter-spacing:0.25px;left:754px;width:600px;text-align:right;margin-right:-0.25px;">736</div>
<div class="t" style="top:776px;font-size:12px;line-height:16px;color:#000;letter-spacing:0.25px;left:843px;width:600px;text-align:right;margin-right:-0.25px;">687</div>
<div class="t" style="top:776px;font-size:12px;line-height:16px;color:#000;letter-spacing:0.25px;left:932px;width:600px;text-align:right;margin-right:-0.25px;">638</div>
<div class="t" style="top:776px;font-size:12px;line-height:16px;color:#000;letter-spacing:0.25px;left:1021px;width:600px;text-align:right;margin-right:-0.25px;">589</div>
<div class="t" style="top:776px;font-size:12px;line-height:16px;color:#000;letter-spacing:0.25px;left:1110px;width:600px;text-align:right;margin-right:-0.25px;">540</div>
<div class="t" style="top:776px;font-size:12px;line-height:16px;color:#000;letter-spacing:0.25px;left:1199px;width:600px;text-align:right;margin-right:-0.25px;">491</div>
<div class="t" style="top:776px;font-size:12px;line-height:16px;color:#000;letter-spacing:0.25px;left:1288px;width:600px;text-align:right;margin-right:-0.25px;">442</div>
<div class="t" style="top:793px;font-size:12px;line-height:16px;color:#222;letter-spacing:0.25px;left:-501px;width:600px;text-align:right;margin-right:-0.25px;">plus</div>
<div class="t" style="top:793px;font-size:12px;line-height:16px;color:#0000ff;letter-spacing:0.25px;left:110px;">Senior Debt interest capitalised</div>
<div class="t" style="top:793px;font-size:12px;line-height:16px;color:#0000ff;letter-spacing:0.25px;left:-156px;width:600px;text-align:right;margin-right:-0.25px;">-</div>
<div class="t" style="top:793px;font-size:12px;line-height:16px;color:#0000ff;letter-spacing:0.25px;left:458px;">USD k</div>
<div class="t" style="top:793px;font-size:12px;line-height:16px;color:#0000ff;letter-spacing:0.25px;left:19px;width:600px;text-align:right;margin-right:-0.25px;">-</div>
<div class="t" style="top:793px;font-size:12px;line-height:16px;color:#0000ff;letter-spacing:0.25px;left:110px;width:600px;text-align:right;margin-right:-0.25px;">-</div>
<div class="t" style="top:793px;font-size:12px;line-height:16px;color:#0000ff;letter-spacing:0.25px;left:129px;width:600px;text-align:right;margin-right:-0.25px;">-</div>
<div class="t" style="top:793px;font-size:12px;line-height:16px;color:#0000ff;letter-spacing:0.25px;left:218px;width:600px;text-align:right;margin-right:-0.25px;">-</div>
<div class="t" style="top:793px;font-size:12px;line-height:16px;color:#0000ff;letter-spacing:0.25px;left:307px;width:600px;text-align:right;margin-right:-0.25px;">-</div>
<div class="t" style="top:793px;font-size:12px;line-height:16px;color:#0000ff;letter-spacing:0.25px;left:396px;width:600px;text-align:right;margin-right:-0.25px;">-</div>
<div class="t" style="top:793px;font-size:12px;line-height:16px;color:#0000ff;letter-spacing:0.25px;left:485px;width:600px;text-align:right;margin-right:-0.25px;">-</div>
<div class="t" style="top:793px;font-size:12px;line-height:16px;color:#0000ff;letter-spacing:0.25px;left:574px;width:600px;text-align:right;margin-right:-0.25px;">-</div>
<div class="t" style="top:793px;font-size:12px;line-height:16px;color:#0000ff;letter-spacing:0.25px;left:663px;width:600px;text-align:right;margin-right:-0.25px;">-</div>
<div class="t" style="top:793px;font-size:12px;line-height:16px;color:#0000ff;letter-spacing:0.25px;left:752px;width:600px;text-align:right;margin-right:-0.25px;">-</div>
<div class="t" style="top:793px;font-size:12px;line-height:16px;color:#0000ff;letter-spacing:0.25px;left:841px;width:600px;text-align:right;margin-right:-0.25px;">-</div>
<div class="t" style="top:793px;font-size:12px;line-height:16px;color:#0000ff;letter-spacing:0.25px;left:930px;width:600px;text-align:right;margin-right:-0.25px;">-</div>
<div class="t" style="top:793px;font-size:12px;line-height:16px;color:#0000ff;letter-spacing:0.25px;left:1019px;width:600px;text-align:right;margin-right:-0.25px;">-</div>
<div class="t" style="top:793px;font-size:12px;line-height:16px;color:#0000ff;letter-spacing:0.25px;left:1108px;width:600px;text-align:right;margin-right:-0.25px;">-</div>
<div class="t" style="top:793px;font-size:12px;line-height:16px;color:#0000ff;letter-spacing:0.25px;left:1197px;width:600px;text-align:right;margin-right:-0.25px;">-</div>
<div class="t" style="top:793px;font-size:12px;line-height:16px;color:#0000ff;letter-spacing:0.25px;left:1286px;width:600px;text-align:right;margin-right:-0.25px;">-</div>
<div class="t" style="top:810px;font-size:12px;line-height:16px;color:#222;letter-spacing:0.25px;left:-501px;width:600px;text-align:right;margin-right:-0.25px;">plus</div>
<div class="t" style="top:810px;font-size:12px;line-height:16px;color:#0000ff;letter-spacing:0.25px;left:110px;">Senior Debt agency fees capitalised</div>
<div class="t" style="top:810px;font-size:12px;line-height:16px;color:#0000ff;letter-spacing:0.25px;left:-156px;width:600px;text-align:right;margin-right:-0.25px;">-</div>
<div class="t" style="top:810px;font-size:12px;line-height:16px;color:#0000ff;letter-spacing:0.25px;left:458px;">USD k</div>
<div class="t" style="top:810px;font-size:12px;line-height:16px;color:#0000ff;letter-spacing:0.25px;left:19px;width:600px;text-align:right;margin-right:-0.25px;">-</div>
<div class="t" style="top:810px;font-size:12px;line-height:16px;color:#0000ff;letter-spacing:0.25px;left:112px;width:600px;text-align:right;margin-right:-0.25px;">10</div>
<div class="t" style="top:810px;font-size:12px;line-height:16px;color:#0000ff;letter-spacing:0.25px;left:129px;width:600px;text-align:right;margin-right:-0.25px;">-</div>
<div class="t" style="top:810px;font-size:12px;line-height:16px;color:#0000ff;letter-spacing:0.25px;left:220px;width:600px;text-align:right;margin-right:-0.25px;">10</div>
<div class="t" style="top:810px;font-size:12px;line-height:16px;color:#0000ff;letter-spacing:0.25px;left:307px;width:600px;text-align:right;margin-right:-0.25px;">-</div>
<div class="t" style="top:810px;font-size:12px;line-height:16px;color:#0000ff;letter-spacing:0.25px;left:396px;width:600px;text-align:right;margin-right:-0.25px;">-</div>
<div class="t" style="top:810px;font-size:12px;line-height:16px;color:#0000ff;letter-spacing:0.25px;left:485px;width:600px;text-align:right;margin-right:-0.25px;">-</div>
<div class="t" style="top:810px;font-size:12px;line-height:16px;color:#0000ff;letter-spacing:0.25px;left:574px;width:600px;text-align:right;margin-right:-0.25px;">-</div>
<div class="t" style="top:810px;font-size:12px;line-height:16px;color:#0000ff;letter-spacing:0.25px;left:663px;width:600px;text-align:right;margin-right:-0.25px;">-</div>
<div class="t" style="top:810px;font-size:12px;line-height:16px;color:#0000ff;letter-spacing:0.25px;left:752px;width:600px;text-align:right;margin-right:-0.25px;">-</div>
<div class="t" style="top:810px;font-size:12px;line-height:16px;color:#0000ff;letter-spacing:0.25px;left:841px;width:600px;text-align:right;margin-right:-0.25px;">-</div>
<div class="t" style="top:810px;font-size:12px;line-height:16px;color:#0000ff;letter-spacing:0.25px;left:930px;width:600px;text-align:right;margin-right:-0.25px;">-</div>
<div class="t" style="top:810px;font-size:12px;line-height:16px;color:#0000ff;letter-spacing:0.25px;left:1019px;width:600px;text-align:right;margin-right:-0.25px;">-</div>
<div class="t" style="top:810px;font-size:12px;line-height:16px;color:#0000ff;letter-spacing:0.25px;left:1108px;width:600px;text-align:right;margin-right:-0.25px;">-</div>
<div class="t" style="top:810px;font-size:12px;line-height:16px;color:#0000ff;letter-spacing:0.25px;left:1197px;width:600px;text-align:right;margin-right:-0.25px;">-</div>
<div class="t" style="top:810px;font-size:12px;line-height:16px;color:#0000ff;letter-spacing:0.25px;left:1286px;width:600px;text-align:right;margin-right:-0.25px;">-</div>
<div class="t" style="top:827px;font-size:12px;line-height:16px;color:#222;letter-spacing:0.25px;left:-501px;width:600px;text-align:right;margin-right:-0.25px;">plus</div>
<div class="t" style="top:827px;font-size:12px;line-height:16px;color:#0000ff;letter-spacing:0.25px;left:110px;">Senior Debt arrangement fees capitalised</div>
<div class="t" style="top:827px;font-size:12px;line-height:16px;color:#0000ff;letter-spacing:0.25px;left:-156px;width:600px;text-align:right;margin-right:-0.25px;">-</div>
<div class="t" style="top:827px;font-size:12px;line-height:16px;color:#0000ff;letter-spacing:0.25px;left:458px;">USD k</div>
<div class="t" style="top:827px;font-size:12px;line-height:16px;color:#0000ff;letter-spacing:0.25px;left:19px;width:600px;text-align:right;margin-right:-0.25px;">-</div>
<div class="t" style="top:827px;font-size:12px;line-height:16px;color:#0000ff;letter-spacing:0.25px;left:112px;width:600px;text-align:right;margin-right:-0.25px;">243</div>
<div class="t" style="top:827px;font-size:12px;line-height:16px;color:#0000ff;letter-spacing:0.25px;left:129px;width:600px;text-align:right;margin-right:-0.25px;">-</div>
<div class="t" style="top:827px;font-size:12px;line-height:16px;color:#0000ff;letter-spacing:0.25px;left:220px;width:600px;text-align:right;margin-right:-0.25px;">243</div>
<div class="t" style="top:827px;font-size:12px;line-height:16px;color:#0000ff;letter-spacing:0.25px;left:307px;width:600px;text-align:right;margin-right:-0.25px;">-</div>
<div class="t" style="top:827px;font-size:12px;line-height:16px;color:#0000ff;letter-spacing:0.25px;left:396px;width:600px;text-align:right;margin-right:-0.25px;">-</div>
<div class="t" style="top:827px;font-size:12px;line-height:16px;color:#0000ff;letter-spacing:0.25px;left:485px;width:600px;text-align:right;margin-right:-0.25px;">-</div>
<div class="t" style="top:827px;font-size:12px;line-height:16px;color:#0000ff;letter-spacing:0.25px;left:574px;width:600px;text-align:right;margin-right:-0.25px;">-</div>
<div class="t" style="top:827px;font-size:12px;line-height:16px;color:#0000ff;letter-spacing:0.25px;left:663px;width:600px;text-align:right;margin-right:-0.25px;">-</div>
<div class="t" style="top:827px;font-size:12px;line-height:16px;color:#0000ff;letter-spacing:0.25px;left:752px;width:600px;text-align:right;margin-right:-0.25px;">-</div>
<div class="t" style="top:827px;font-size:12px;line-height:16px;color:#0000ff;letter-spacing:0.25px;left:841px;width:600px;text-align:right;margin-right:-0.25px;">-</div>
<div class="t" style="top:827px;font-size:12px;line-height:16px;color:#0000ff;letter-spacing:0.25px;left:930px;width:600px;text-align:right;margin-right:-0.25px;">-</div>
<div class="t" style="top:827px;font-size:12px;line-height:16px;color:#0000ff;letter-spacing:0.25px;left:1019px;width:600px;text-align:right;margin-right:-0.25px;">-</div>
<div class="t" style="top:827px;font-size:12px;line-height:16px;color:#0000ff;letter-spacing:0.25px;left:1108px;width:600px;text-align:right;margin-right:-0.25px;">-</div>
<div class="t" style="top:827px;font-size:12px;line-height:16px;color:#0000ff;letter-spacing:0.25px;left:1197px;width:600px;text-align:right;margin-right:-0.25px;">-</div>
<div class="t" style="top:827px;font-size:12px;line-height:16px;color:#0000ff;letter-spacing:0.25px;left:1286px;width:600px;text-align:right;margin-right:-0.25px;">-</div>
<div class="t" style="top:844px;font-size:12px;line-height:16px;color:#222;letter-spacing:0.25px;left:-501px;width:600px;text-align:right;margin-right:-0.25px;">plus</div>
<div class="t" style="top:844px;font-size:12px;line-height:16px;color:#0000ff;letter-spacing:0.25px;left:110px;">Senior Debt commitment fees capitalised</div>
<div class="t" style="top:844px;font-size:12px;line-height:16px;color:#0000ff;letter-spacing:0.25px;left:-156px;width:600px;text-align:right;margin-right:-0.25px;">-</div>
<div class="t" style="top:844px;font-size:12px;line-height:16px;color:#0000ff;letter-spacing:0.25px;left:458px;">USD k</div>
<div class="t" style="top:844px;font-size:12px;line-height:16px;color:#0000ff;letter-spacing:0.25px;left:19px;width:600px;text-align:right;margin-right:-0.25px;">-</div>
<div class="t" style="top:844px;font-size:12px;line-height:16px;color:#0000ff;letter-spacing:0.25px;left:112px;width:600px;text-align:right;margin-right:-0.25px;">728</div>
<div class="t" style="top:844px;font-size:12px;line-height:16px;color:#0000ff;letter-spacing:0.25px;left:129px;width:600px;text-align:right;margin-right:-0.25px;">-</div>
<div class="t" style="top:844px;font-size:12px;line-height:16px;color:#0000ff;letter-spacing:0.25px;left:220px;width:600px;text-align:right;margin-right:-0.25px;">728</div>
<div class="t" style="top:844px;font-size:12px;line-height:16px;color:#0000ff;letter-spacing:0.25px;left:307px;width:600px;text-align:right;margin-right:-0.25px;">-</div>
<div class="t" style="top:844px;font-size:12px;line-height:16px;color:#0000ff;letter-spacing:0.25px;left:396px;width:600px;text-align:right;margin-right:-0.25px;">-</div>
<div class="t" style="top:844px;font-size:12px;line-height:16px;color:#0000ff;letter-spacing:0.25px;left:485px;width:600px;text-align:right;margin-right:-0.25px;">-</div>
<div class="t" style="top:844px;font-size:12px;line-height:16px;color:#0000ff;letter-spacing:0.25px;left:574px;width:600px;text-align:right;margin-right:-0.25px;">-</div>
<div class="t" style="top:844px;font-size:12px;line-height:16px;color:#0000ff;letter-spacing:0.25px;left:663px;width:600px;text-align:right;margin-right:-0.25px;">-</div>
<div class="t" style="top:844px;font-size:12px;line-height:16px;color:#0000ff;letter-spacing:0.25px;left:752px;width:600px;text-align:right;margin-right:-0.25px;">-</div>
<div class="t" style="top:844px;font-size:12px;line-height:16px;color:#0000ff;letter-spacing:0.25px;left:841px;width:600px;text-align:right;margin-right:-0.25px;">-</div>
<div class="t" style="top:844px;font-size:12px;line-height:16px;color:#0000ff;letter-spacing:0.25px;left:930px;width:600px;text-align:right;margin-right:-0.25px;">-</div>
<div class="t" style="top:844px;font-size:12px;line-height:16px;color:#0000ff;letter-spacing:0.25px;left:1019px;width:600px;text-align:right;margin-right:-0.25px;">-</div>
<div class="t" style="top:844px;font-size:12px;line-height:16px;color:#0000ff;letter-spacing:0.25px;left:1108px;width:600px;text-align:right;margin-right:-0.25px;">-</div>
<div class="t" style="top:844px;font-size:12px;line-height:16px;color:#0000ff;letter-spacing:0.25px;left:1197px;width:600px;text-align:right;margin-right:-0.25px;">-</div>
<div class="t" style="top:844px;font-size:12px;line-height:16px;color:#0000ff;letter-spacing:0.25px;left:1286px;width:600px;text-align:right;margin-right:-0.25px;">-</div>
<div class="t" style="top:861px;font-size:12px;line-height:16px;color:#222;letter-spacing:0.25px;left:-501px;width:600px;text-align:right;margin-right:-0.25px;">plus</div>
<div class="t" style="top:861px;font-size:12px;line-height:16px;color:#0000ff;letter-spacing:0.25px;left:110px;">Sub debt interest capitalised</div>
<div class="t" style="top:861px;font-size:12px;line-height:16px;color:#0000ff;letter-spacing:0.25px;left:-156px;width:600px;text-align:right;margin-right:-0.25px;">-</div>
<div class="t" style="top:861px;font-size:12px;line-height:16px;color:#0000ff;letter-spacing:0.25px;left:458px;">USD k</div>
<div class="t" style="top:861px;font-size:12px;line-height:16px;color:#0000ff;letter-spacing:0.25px;left:19px;width:600px;text-align:right;margin-right:-0.25px;">-</div>
<div class="t" style="top:861px;font-size:12px;line-height:16px;color:#0000ff;letter-spacing:0.25px;left:110px;width:600px;text-align:right;margin-right:-0.25px;">-</div>
<div class="t" style="top:861px;font-size:12px;line-height:16px;color:#0000ff;letter-spacing:0.25px;left:129px;width:600px;text-align:right;margin-right:-0.25px;">-</div>
<div class="t" style="top:861px;font-size:12px;line-height:16px;color:#0000ff;letter-spacing:0.25px;left:218px;width:600px;text-align:right;margin-right:-0.25px;">-</div>
<div class="t" style="top:861px;font-size:12px;line-height:16px;color:#0000ff;letter-spacing:0.25px;left:307px;width:600px;text-align:right;margin-right:-0.25px;">-</div>
<div class="t" style="top:861px;font-size:12px;line-height:16px;color:#0000ff;letter-spacing:0.25px;left:396px;width:600px;text-align:right;margin-right:-0.25px;">-</div>
<div class="t" style="top:861px;font-size:12px;line-height:16px;color:#0000ff;letter-spacing:0.25px;left:485px;width:600px;text-align:right;margin-right:-0.25px;">-</div>
<div class="t" style="top:861px;font-size:12px;line-height:16px;color:#0000ff;letter-spacing:0.25px;left:574px;width:600px;text-align:right;margin-right:-0.25px;">-</div>
<div class="t" style="top:861px;font-size:12px;line-height:16px;color:#0000ff;letter-spacing:0.25px;left:663px;width:600px;text-align:right;margin-right:-0.25px;">-</div>
<div class="t" style="top:861px;font-size:12px;line-height:16px;color:#0000ff;letter-spacing:0.25px;left:752px;width:600px;text-align:right;margin-right:-0.25px;">-</div>
<div class="t" style="top:861px;font-size:12px;line-height:16px;color:#0000ff;letter-spacing:0.25px;left:841px;width:600px;text-align:right;margin-right:-0.25px;">-</div>
<div class="t" style="top:861px;font-size:12px;line-height:16px;color:#0000ff;letter-spacing:0.25px;left:930px;width:600px;text-align:right;margin-right:-0.25px;">-</div>
<div class="t" style="top:861px;font-size:12px;line-height:16px;color:#0000ff;letter-spacing:0.25px;left:1019px;width:600px;text-align:right;margin-right:-0.25px;">-</div>
<div class="t" style="top:861px;font-size:12px;line-height:16px;color:#0000ff;letter-spacing:0.25px;left:1108px;width:600px;text-align:right;margin-right:-0.25px;">-</div>
<div class="t" style="top:861px;font-size:12px;line-height:16px;color:#0000ff;letter-spacing:0.25px;left:1197px;width:600px;text-align:right;margin-right:-0.25px;">-</div>
<div class="t" style="top:861px;font-size:12px;line-height:16px;color:#0000ff;letter-spacing:0.25px;left:1286px;width:600px;text-align:right;margin-right:-0.25px;">-</div>
<div class="t" style="top:878px;font-size:12px;line-height:16px;color:#222;letter-spacing:0.25px;left:-501px;width:600px;text-align:right;margin-right:-0.25px;">less</div>
<div class="t" style="top:878px;font-size:12px;line-height:16px;color:#0000ff;letter-spacing:0.25px;left:110px;">Financial assets amortisation NEG</div>
<div class="t" style="top:878px;font-size:12px;line-height:16px;color:#0000ff;letter-spacing:0.25px;left:-156px;width:600px;text-align:right;margin-right:-0.25px;">-</div>
<div class="t" style="top:878px;font-size:12px;line-height:16px;color:#0000ff;letter-spacing:0.25px;left:458px;">USD k</div>
<div class="t" style="top:878px;font-size:12px;line-height:16px;color:#0000ff;letter-spacing:0.25px;left:19px;width:600px;text-align:right;margin-right:-0.25px;">-</div>
<div class="t" style="top:878px;font-size:12px;line-height:16px;color:#0000ff;letter-spacing:0.25px;left:116px;width:600px;text-align:right;margin-right:-0.25px;">(981)</div>
<div class="t" style="top:878px;font-size:12px;line-height:16px;color:#0000ff;letter-spacing:0.25px;left:129px;width:600px;text-align:right;margin-right:-0.25px;">-</div>
<div class="t" style="top:878px;font-size:12px;line-height:16px;color:#0000ff;letter-spacing:0.25px;left:218px;width:600px;text-align:right;margin-right:-0.25px;">-</div>
<div class="t" style="top:878px;font-size:12px;line-height:16px;color:#0000ff;letter-spacing:0.25px;left:313px;width:600px;text-align:right;margin-right:-0.25px;">(49)</div>
<div class="t" style="top:878px;font-size:12px;line-height:16px;color:#0000ff;letter-spacing:0.25px;left:402px;width:600px;text-align:right;margin-right:-0.25px;">(49)</div>
<div class="t" style="top:878px;font-size:12px;line-height:16px;color:#0000ff;letter-spacing:0.25px;left:491px;width:600px;text-align:right;margin-right:-0.25px;">(49)</div>
<div class="t" style="top:878px;font-size:12px;line-height:16px;color:#0000ff;letter-spacing:0.25px;left:580px;width:600px;text-align:right;margin-right:-0.25px;">(49)</div>
<div class="t" style="top:878px;font-size:12px;line-height:16px;color:#0000ff;letter-spacing:0.25px;left:669px;width:600px;text-align:right;margin-right:-0.25px;">(49)</div>
<div class="t" style="top:878px;font-size:12px;line-height:16px;color:#0000ff;letter-spacing:0.25px;left:758px;width:600px;text-align:right;margin-right:-0.25px;">(49)</div>
<div class="t" style="top:878px;font-size:12px;line-height:16px;color:#0000ff;letter-spacing:0.25px;left:847px;width:600px;text-align:right;margin-right:-0.25px;">(49)</div>
<div class="t" style="top:878px;font-size:12px;line-height:16px;color:#0000ff;letter-spacing:0.25px;left:936px;width:600px;text-align:right;margin-right:-0.25px;">(49)</div>
<div class="t" style="top:878px;font-size:12px;line-height:16px;color:#0000ff;letter-spacing:0.25px;left:1025px;width:600px;text-align:right;margin-right:-0.25px;">(49)</div>
<div class="t" style="top:878px;font-size:12px;line-height:16px;color:#0000ff;letter-spacing:0.25px;left:1114px;width:600px;text-align:right;margin-right:-0.25px;">(49)</div>
<div class="t" style="top:878px;font-size:12px;line-height:16px;color:#0000ff;letter-spacing:0.25px;left:1203px;width:600px;text-align:right;margin-right:-0.25px;">(49)</div>
<div class="t" style="top:878px;font-size:12px;line-height:16px;color:#0000ff;letter-spacing:0.25px;left:1292px;width:600px;text-align:right;margin-right:-0.25px;">(49)</div>
<div class="t" style="top:895px;font-size:12px;line-height:16px;color:#ff0000;letter-spacing:0.25px;left:110px;">Financial assets balance</div>
<div class="t" style="top:895px;font-size:12px;line-height:16px;color:#ff0000;letter-spacing:0.25px;left:458px;">USD k</div>
<div class="t" style="top:895px;font-size:12px;line-height:16px;color:#ff0000;letter-spacing:0.25px;left:220px;width:600px;text-align:right;margin-right:-0.25px;">981</div>
<div class="t" style="top:895px;font-size:12px;line-height:16px;color:#ff0000;letter-spacing:0.25px;left:309px;width:600px;text-align:right;margin-right:-0.25px;">932</div>
<div class="t" style="top:895px;font-size:12px;line-height:16px;color:#ff0000;letter-spacing:0.25px;left:398px;width:600px;text-align:right;margin-right:-0.25px;">883</div>
<div class="t" style="top:895px;font-size:12px;line-height:16px;color:#ff0000;letter-spacing:0.25px;left:487px;width:600px;text-align:right;margin-right:-0.25px;">834</div>
<div class="t" style="top:895px;font-size:12px;line-height:16px;color:#ff0000;letter-spacing:0.25px;left:576px;width:600px;text-align:right;margin-right:-0.25px;">785</div>
<div class="t" style="top:895px;font-size:12px;line-height:16px;color:#ff0000;letter-spacing:0.25px;left:665px;width:600px;text-align:right;margin-right:-0.25px;">736</div>
<div class="t" style="top:895px;font-size:12px;line-height:16px;color:#ff0000;letter-spacing:0.25px;left:754px;width:600px;text-align:right;margin-right:-0.25px;">687</div>
<div class="t" style="top:895px;font-size:12px;line-height:16px;color:#ff0000;letter-spacing:0.25px;left:843px;width:600px;text-align:right;margin-right:-0.25px;">638</div>
<div class="t" style="top:895px;font-size:12px;line-height:16px;color:#ff0000;letter-spacing:0.25px;left:932px;width:600px;text-align:right;margin-right:-0.25px;">589</div>
<div class="t" style="top:895px;font-size:12px;line-height:16px;color:#ff0000;letter-spacing:0.25px;left:1021px;width:600px;text-align:right;margin-right:-0.25px;">540</div>
<div class="t" style="top:895px;font-size:12px;line-height:16px;color:#ff0000;letter-spacing:0.25px;left:1110px;width:600px;text-align:right;margin-right:-0.25px;">491</div>
<div class="t" style="top:895px;font-size:12px;line-height:16px;color:#ff0000;letter-spacing:0.25px;left:1199px;width:600px;text-align:right;margin-right:-0.25px;">442</div>
<div class="t" style="top:895px;font-size:12px;line-height:16px;color:#ff0000;letter-spacing:0.25px;left:1288px;width:600px;text-align:right;margin-right:-0.25px;">392</div>
<div class="t" style="top:1002px;font-size:12px;line-height:16px;color:#0000ff;letter-spacing:0.25px;left:110px;">Trade debtors balance [A]</div>
<div class="t" style="top:1002px;font-size:12px;line-height:16px;color:#0000ff;letter-spacing:0.25px;left:-156px;width:600px;text-align:right;margin-right:-0.25px;">-</div>
<div class="t" style="top:1002px;font-size:12px;line-height:16px;color:#0000ff;letter-spacing:0.25px;left:458px;">USD k</div>
<div class="t" style="top:1002px;font-size:12px;line-height:16px;color:#0000ff;letter-spacing:0.25px;left:19px;width:600px;text-align:right;margin-right:-0.25px;">-</div>
<div class="t" style="top:1002px;font-size:12px;line-height:16px;color:#0000ff;letter-spacing:0.25px;left:110px;width:600px;text-align:right;margin-right:-0.25px;">-</div>
<div class="t" style="top:1002px;font-size:12px;line-height:16px;color:#0000ff;letter-spacing:0.25px;left:129px;width:600px;text-align:right;margin-right:-0.25px;">-</div>
<div class="t" style="top:1002px;font-size:12px;line-height:16px;color:#0000ff;letter-spacing:0.25px;left:218px;width:600px;text-align:right;margin-right:-0.25px;">-</div>
<div class="t" style="top:1002px;font-size:12px;line-height:16px;color:#0000ff;letter-spacing:0.25px;left:307px;width:600px;text-align:right;margin-right:-0.25px;">-</div>
<div class="t" style="top:1002px;font-size:12px;line-height:16px;color:#0000ff;letter-spacing:0.25px;left:396px;width:600px;text-align:right;margin-right:-0.25px;">-</div>
<div class="t" style="top:1002px;font-size:12px;line-height:16px;color:#0000ff;letter-spacing:0.25px;left:485px;width:600px;text-align:right;margin-right:-0.25px;">-</div>
<div class="t" style="top:1002px;font-size:12px;line-height:16px;color:#0000ff;letter-spacing:0.25px;left:574px;width:600px;text-align:right;margin-right:-0.25px;">-</div>
<div class="t" style="top:1002px;font-size:12px;line-height:16px;color:#0000ff;letter-spacing:0.25px;left:663px;width:600px;text-align:right;margin-right:-0.25px;">-</div>
<div class="t" style="top:1002px;font-size:12px;line-height:16px;color:#0000ff;letter-spacing:0.25px;left:752px;width:600px;text-align:right;margin-right:-0.25px;">-</div>
<div class="t" style="top:1002px;font-size:12px;line-height:16px;color:#0000ff;letter-spacing:0.25px;left:841px;width:600px;text-align:right;margin-right:-0.25px;">-</div>
<div class="t" style="top:1002px;font-size:12px;line-height:16px;color:#0000ff;letter-spacing:0.25px;left:930px;width:600px;text-align:right;margin-right:-0.25px;">-</div>
<div class="t" style="top:1002px;font-size:12px;line-height:16px;color:#0000ff;letter-spacing:0.25px;left:1019px;width:600px;text-align:right;margin-right:-0.25px;">-</div>
<div class="t" style="top:1002px;font-size:12px;line-height:16px;color:#0000ff;letter-spacing:0.25px;left:1108px;width:600px;text-align:right;margin-right:-0.25px;">-</div>
<div class="t" style="top:1002px;font-size:12px;line-height:16px;color:#0000ff;letter-spacing:0.25px;left:1197px;width:600px;text-align:right;margin-right:-0.25px;">-</div>
<div class="t" style="top:1002px;font-size:12px;line-height:16px;color:#0000ff;letter-spacing:0.25px;left:1286px;width:600px;text-align:right;margin-right:-0.25px;">-</div>
<div class="t" style="top:1019px;font-size:12px;line-height:16px;color:#0000ff;letter-spacing:0.25px;left:110px;">Actuals period flag</div>
<div class="t" style="top:1019px;font-size:12px;line-height:16px;color:#0000ff;letter-spacing:0.25px;left:-156px;width:600px;text-align:right;margin-right:-0.25px;">-</div>
<div class="t" style="top:1019px;font-size:12px;line-height:16px;color:#0000ff;letter-spacing:0.25px;left:458px;">flag</div>
<div class="t" style="top:1019px;font-size:12px;line-height:16px;color:#0000ff;letter-spacing:0.25px;left:19px;width:600px;text-align:right;margin-right:-0.25px;">-</div>
<div class="t" style="top:1019px;font-size:12px;line-height:16px;color:#0000ff;letter-spacing:0.25px;left:110px;width:600px;text-align:right;margin-right:-0.25px;">-</div>
<div class="t" style="top:1019px;font-size:12px;line-height:16px;color:#0000ff;letter-spacing:0.25px;left:129px;width:600px;text-align:right;margin-right:-0.25px;">-</div>
<div class="t" style="top:1019px;font-size:12px;line-height:16px;color:#0000ff;letter-spacing:0.25px;left:218px;width:600px;text-align:right;margin-right:-0.25px;">-</div>
<div class="t" style="top:1019px;font-size:12px;line-height:16px;color:#0000ff;letter-spacing:0.25px;left:307px;width:600px;text-align:right;margin-right:-0.25px;">-</div>
<div class="t" style="top:1019px;font-size:12px;line-height:16px;color:#0000ff;letter-spacing:0.25px;left:396px;width:600px;text-align:right;margin-right:-0.25px;">-</div>
<div class="t" style="top:1019px;font-size:12px;line-height:16px;color:#0000ff;letter-spacing:0.25px;left:485px;width:600px;text-align:right;margin-right:-0.25px;">-</div>
<div class="t" style="top:1019px;font-size:12px;line-height:16px;color:#0000ff;letter-spacing:0.25px;left:574px;width:600px;text-align:right;margin-right:-0.25px;">-</div>
<div class="t" style="top:1019px;font-size:12px;line-height:16px;color:#0000ff;letter-spacing:0.25px;left:663px;width:600px;text-align:right;margin-right:-0.25px;">-</div>
<div class="t" style="top:1019px;font-size:12px;line-height:16px;color:#0000ff;letter-spacing:0.25px;left:752px;width:600px;text-align:right;margin-right:-0.25px;">-</div>
<div class="t" style="top:1019px;font-size:12px;line-height:16px;color:#0000ff;letter-spacing:0.25px;left:841px;width:600px;text-align:right;margin-right:-0.25px;">-</div>
<div class="t" style="top:1019px;font-size:12px;line-height:16px;color:#0000ff;letter-spacing:0.25px;left:930px;width:600px;text-align:right;margin-right:-0.25px;">-</div>
<div class="t" style="top:1019px;font-size:12px;line-height:16px;color:#0000ff;letter-spacing:0.25px;left:1019px;width:600px;text-align:right;margin-right:-0.25px;">-</div>
<div class="t" style="top:1019px;font-size:12px;line-height:16px;color:#0000ff;letter-spacing:0.25px;left:1108px;width:600px;text-align:right;margin-right:-0.25px;">-</div>
<div class="t" style="top:1019px;font-size:12px;line-height:16px;color:#0000ff;letter-spacing:0.25px;left:1197px;width:600px;text-align:right;margin-right:-0.25px;">-</div>
<div class="t" style="top:1019px;font-size:12px;line-height:16px;color:#0000ff;letter-spacing:0.25px;left:1286px;width:600px;text-align:right;margin-right:-0.25px;">-</div>
<div style="position:absolute;left:736px;top:270px;width:92px;height:21px;border:2px solid #217346;box-sizing:border-box"></div>
<div style="position:absolute;left:823px;top:286px;width:7px;height:7px;background:#fff;"></div>
<div style="position:absolute;left:824px;top:287px;width:5px;height:5px;background:#217346;"></div>
<div style="position:absolute;left:737px;top:156px;width:1px;height:867px;background:#9e9e9e;"></div>
<div style="position:absolute;left:65px;top:271px;width:1829px;height:1px;background:#9e9e9e;"></div>
</div></div>
<div style="position:absolute;left:1894px;top:155px;width:1px;height:869px;background:#ababab;"></div>
<div style="position:absolute;left:0px;top:1023px;width:1894px;height:1px;background:#ababab;"></div>
<div style="position:absolute;left:1898px;top:157px;width:19px;height:847px;background:#d6d6d6;"></div>
<div style="position:absolute;left:1898px;top:138px;width:19px;height:19px;background:#fff;border:1px solid #ababab;box-sizing:border-box"></div>
<svg style="position:absolute;left:1902px;top:143px;" width="11" height="7" viewBox="0 0 11 7"><path d="M0.5 6.5 L5.5 0.5 L10.5 6.5 Z" fill="#606060"/></svg>
<div style="position:absolute;left:1898px;top:157px;width:19px;height:447px;background:#fff;border:1px solid #ababab;box-sizing:border-box"></div>
<div style="position:absolute;left:1898px;top:1004px;width:19px;height:19px;background:#fff;border:1px solid #ababab;box-sizing:border-box"></div>
<svg style="position:absolute;left:1902px;top:1011px;" width="11" height="7" viewBox="0 0 11 7"><path d="M0.5 0.5 L5.5 6.5 L10.5 0.5 Z" fill="#606060"/></svg>
<div style="position:absolute;left:0px;top:1024px;width:1920px;height:28px;background:#e6e6e6;"></div>
<svg style="position:absolute;left:27px;top:1032px;" width="7" height="10" viewBox="0 0 7 10"><path d="M6.5 0 V10 L0 5 Z" fill="#217346"/></svg>
<svg style="position:absolute;left:56px;top:1032px;" width="7" height="10" viewBox="0 0 7 10"><path d="M0.5 0 V10 L7 5 Z" fill="#217346"/></svg>
<div style="position:absolute;left:82px;top:1039px;width:2px;height:2px;background:#217346;"></div>
<div style="position:absolute;left:87px;top:1039px;width:2px;height:2px;background:#217346;"></div>
<div style="position:absolute;left:92px;top:1039px;width:2px;height:2px;background:#217346;"></div>
<div style="position:absolute;left:103px;top:1028px;width:1px;height:20px;background:#c6c6c6;"></div>
<div style="position:absolute;left:106px;top:1026px;width:80px;height:22px;background:#c0c0c0;"></div>
<div style="position:absolute;left:188px;top:1028px;width:1px;height:20px;background:#c6c6c6;"></div>
<div class="t" style="top:1023px;font-size:16.3px;line-height:22px;color:#222;left:117px;">Volume</div>
<div style="position:absolute;left:191px;top:1026px;width:86px;height:22px;background:#c0c0c0;"></div>
<div style="position:absolute;left:279px;top:1028px;width:1px;height:20px;background:#c6c6c6;"></div>
<div class="t" style="top:1023px;font-size:16.3px;line-height:22px;color:#222;left:202px;">Revenue</div>
<div style="position:absolute;left:282px;top:1026px;width:61px;height:22px;background:#c0c0c0;"></div>
<div style="position:absolute;left:345px;top:1028px;width:1px;height:20px;background:#c6c6c6;"></div>
<div class="t" style="top:1023px;font-size:16.3px;line-height:22px;color:#222;left:291px;">Costs</div>
<div style="position:absolute;left:348px;top:1026px;width:61px;height:22px;background:#c0c0c0;"></div>
<div style="position:absolute;left:411px;top:1028px;width:1px;height:20px;background:#c6c6c6;"></div>
<div class="t" style="top:1023px;font-size:16.3px;line-height:22px;color:#222;left:358px;">Opex</div>
<div style="position:absolute;left:414px;top:1026px;width:68px;height:22px;background:#c0c0c0;"></div>
<div style="position:absolute;left:484px;top:1028px;width:1px;height:20px;background:#c6c6c6;"></div>
<div class="t" style="top:1023px;font-size:16.3px;line-height:22px;color:#222;left:424px;">Capex</div>
<div style="position:absolute;left:487px;top:1026px;width:96px;height:22px;background:#c0c0c0;"></div>
<div style="position:absolute;left:585px;top:1028px;width:1px;height:20px;background:#c6c6c6;"></div>
<div class="t" style="top:1023px;font-size:16.3px;line-height:22px;color:#222;left:498px;">Financing</div>
<div style="position:absolute;left:588px;top:1026px;width:59px;height:22px;background:#c0c0c0;"></div>
<div style="position:absolute;left:649px;top:1028px;width:1px;height:20px;background:#c6c6c6;"></div>
<div class="t" style="top:1023px;font-size:16.3px;line-height:22px;color:#222;left:598px;">Debt</div>
<div style="position:absolute;left:652px;top:1026px;width:70px;height:22px;background:#c0c0c0;"></div>
<div style="position:absolute;left:724px;top:1028px;width:1px;height:20px;background:#c6c6c6;"></div>
<div class="t" style="top:1023px;font-size:16.3px;line-height:22px;color:#222;left:664px;">Equity</div>
<div style="position:absolute;left:727px;top:1026px;width:47px;height:22px;background:#c0c0c0;"></div>
<div style="position:absolute;left:776px;top:1028px;width:1px;height:20px;background:#c6c6c6;"></div>
<div class="t" style="top:1023px;font-size:16.3px;line-height:22px;color:#222;left:738px;">Tax</div>
<div style="position:absolute;left:779px;top:1026px;width:87px;height:22px;background:#c0c0c0;"></div>
<div style="position:absolute;left:868px;top:1028px;width:1px;height:20px;background:#c6c6c6;"></div>
<div class="t" style="top:1023px;font-size:16.3px;line-height:22px;color:#222;left:790px;">Reserves</div>
<div style="position:absolute;left:871px;top:1026px;width:99px;height:22px;background:#c0c0c0;"></div>
<div style="position:absolute;left:972px;top:1028px;width:1px;height:20px;background:#c6c6c6;"></div>
<div class="t" style="top:1023px;font-size:16.3px;line-height:22px;color:#222;left:883px;">Dividends</div>
<div style="position:absolute;left:972px;top:1023px;width:86px;height:26px;background:linear-gradient(#fff,#f4f4f4);border-left:1px solid #ababab;border-right:1px solid #ababab;box-sizing:border-box"></div>
<div style="position:absolute;left:972px;top:1047px;width:86px;height:2px;background:#217346;"></div>
<div class="t" style="top:1024px;font-size:15.6px;line-height:21px;color:#217346;font-weight:bold;left:985px;">Balance</div>
<div style="position:absolute;left:1060px;top:1026px;width:18px;height:22px;background:#c0c0c0;overflow:hidden"><div class="t" style="left:11px;top:1px;font-size:16.3px;line-height:21px;color:#222">A</div></div>
<div style="position:absolute;left:1085px;top:1039px;width:2px;height:2px;background:#217346;"></div>
<div style="position:absolute;left:1090px;top:1039px;width:2px;height:2px;background:#217346;"></div>
<div style="position:absolute;left:1095px;top:1039px;width:2px;height:2px;background:#217346;"></div>
<svg style="position:absolute;left:1110px;top:1028px;" width="22" height="22" viewBox="0 0 22 22"><circle cx="11" cy="11" r="9.5" fill="none" stroke="#777" stroke-width="1.2"/><path d="M11 5.5 V16.5 M5.5 11 H16.5" stroke="#777" stroke-width="1.6"/></svg>
<div style="position:absolute;left:1149px;top:1031px;width:3px;height:3px;background:#b0b0b0;"></div>
<div style="position:absolute;left:1149px;top:1036px;width:3px;height:3px;background:#b0b0b0;"></div>
<div style="position:absolute;left:1149px;top:1041px;width:3px;height:3px;background:#b0b0b0;"></div>
<div style="position:absolute;left:1185px;top:1029px;width:689px;height:17px;background:#d6d6d6;"></div>
<div style="position:absolute;left:1167px;top:1028px;width:19px;height:19px;background:#fff;border:1px solid #ababab;box-sizing:border-box"></div>
<svg style="position:absolute;left:1174px;top:1033px;" width="7" height="10" viewBox="0 0 7 10"><path d="M6.5 0 V10 L0 5 Z" fill="#606060"/></svg>
<div style="position:absolute;left:1185px;top:1028px;width:356px;height:19px;background:#fff;border:1px solid #ababab;box-sizing:border-box"></div>
<div style="position:absolute;left:1874px;top:1028px;width:19px;height:19px;background:#fff;border:1px solid #ababab;box-sizing:border-box"></div>
<svg style="position:absolute;left:1881px;top:1033px;" width="7" height="10" viewBox="0 0 7 10"><path d="M0.5 0 V10 L7 5 Z" fill="#606060"/></svg>
<div style="position:absolute;left:0px;top:1052px;width:1920px;height:1px;background:#bcbcbc;"></div>
<div style="position:absolute;left:0px;top:1053px;width:1920px;height:25px;background:#f3f2f1;"></div>
<div class="t" style="top:1058px;font-size:12.4px;line-height:17px;color:#444;left:9px;">Ready</div>
<div class="t" style="top:1059px;font-size:12.2px;line-height:16px;color:#444;left:65px;">Calculate</div>
<svg style="position:absolute;left:141px;top:1058px;" width="21" height="17" viewBox="0 0 21 17"><rect x="1.5" y="1.5" width="16" height="12" fill="none" stroke="#666" stroke-width="1.2"/><path d="M1.5 4.5 H17.5 M4 7.5 H7 M4 10.5 H7" stroke="#666" stroke-width="1.2"/><circle cx="14" cy="11" r="4.8" fill="#f3f2f1" stroke="#666" stroke-width="1.2"/><circle cx="14" cy="11" r="2.3" fill="#666"/></svg>
<div style="position:absolute;left:1555px;top:1053px;width:50px;height:25px;background:#d4d4d4;"></div>
<svg style="position:absolute;left:1570px;top:1056px;" width="19" height="19" viewBox="0 0 19 19"><path d="M2 2 H17 V17 H2 Z M2 7 H17 M2 12 H17 M7 2 V17 M12 2 V17" fill="none" stroke="#555" stroke-width="1.5"/></svg>
<svg style="position:absolute;left:1620px;top:1056px;" width="20" height="19" viewBox="0 0 20 19"><rect x="1.5" y="1.5" width="17" height="16" fill="none" stroke="#555" stroke-width="1.5"/><rect x="5" y="4.5" width="10" height="10" fill="none" stroke="#555" stroke-width="1.2"/><path d="M7 8 H13 M7 11 H13" stroke="#555" stroke-width="1"/></svg>
<svg style="position:absolute;left:1670px;top:1056px;" width="20" height="19" viewBox="0 0 20 19"><path d="M1.5 17.5 V1.5 H18.5 V17.5 Z M1.5 11.5 H11.5 V1.5 M6.5 1.5 V11.5" fill="none" stroke="#555" stroke-width="1.5"/></svg>
<div style="position:absolute;left:1712px;top:1065px;width:10px;height:1px;background:#444;"></div>
<div style="position:absolute;left:1728px;top:1066px;width:125px;height:1px;background:#a0a0a0;"></div>
<div style="position:absolute;left:1790px;top:1062px;width:1px;height:9px;background:#a0a0a0;"></div>
<div style="position:absolute;left:1775px;top:1059px;width:6px;height:14px;background:#666;"></div>
<div style="position:absolute;left:1858px;top:1065px;width:11px;height:1px;background:#444;"></div>
<div style="position:absolute;left:1863px;top:1060px;width:1px;height:11px;background:#444;"></div>
<div class="t" style="top:1059px;font-size:11.8px;line-height:16px;color:#444;left:1885px;">80%</div>
<div style="position:absolute;left:0px;top:1078px;width:1920px;height:2px;background:#3a3a3a;"></div>
<div style="position:absolute;left:60px;top:1078px;width:430px;height:2px;background:#d8d8d8;"></div>
<div style="position:absolute;left:864px;top:1078px;width:61px;height:2px;background:#5e5e5e;"></div>
</body></html>
